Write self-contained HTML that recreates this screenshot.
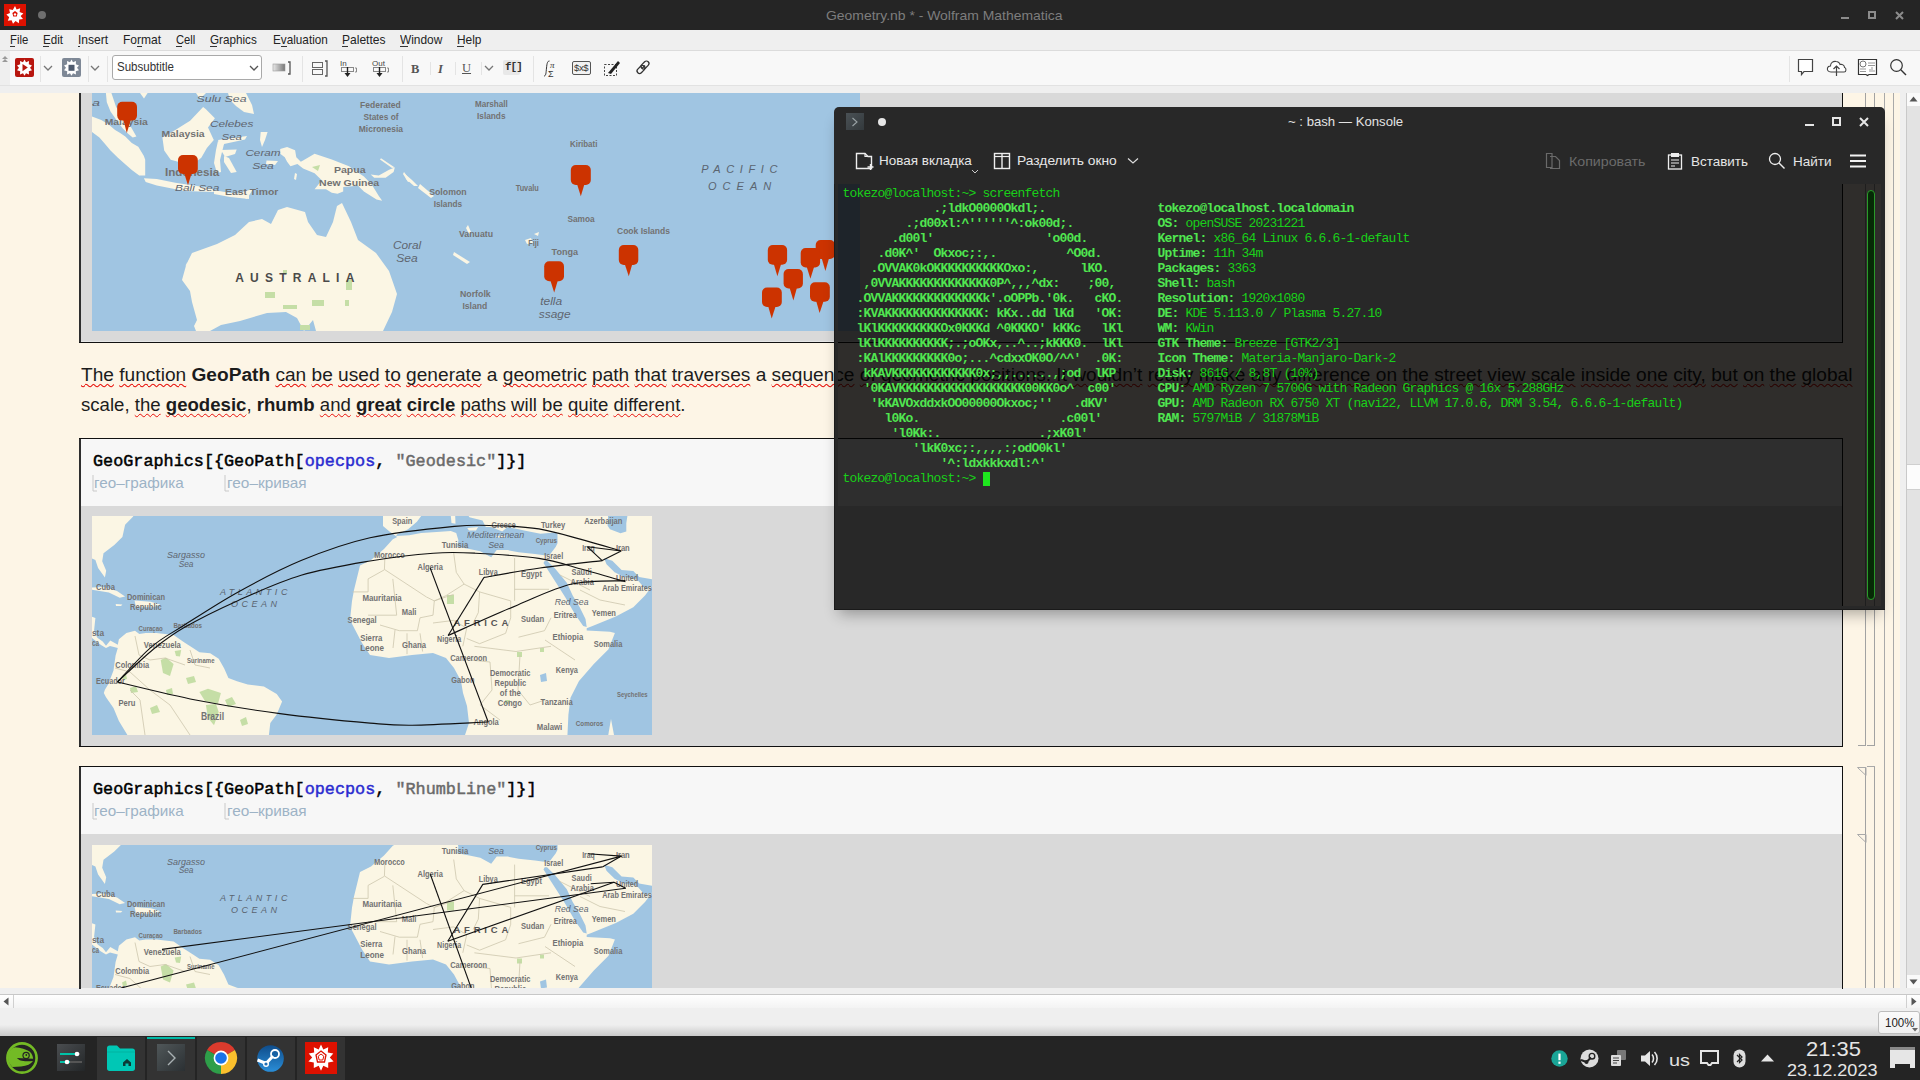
<!DOCTYPE html><html><head><meta charset="utf-8"><style>
*{margin:0;padding:0;box-sizing:border-box}
html,body{width:1920px;height:1080px;overflow:hidden;background:#fdf5e7;position:relative}
.a{position:absolute}
.nw{white-space:nowrap}
svg{position:absolute;overflow:visible}
</style></head><body><div class="a" style="left:0px;top:0px;width:1920px;height:30px;background:#252525;"></div><svg style="left:4px;top:4px" width="22" height="22" viewBox="0 0 22 22"><rect width="22" height="22" fill="#dd1100"/>
<polygon fill="#fff" points="11,2 12.6,5.6 16.2,4.2 15.6,8 19.4,9.4 16.6,12 19,15 15.2,15.4 14.8,19.2 11.6,17 9,19.8 7.6,16.2 3.8,16.8 5.2,13.2 2.4,10.6 6,9 5.2,5.2 8.8,6 "/>
<polygon fill="#dd1100" points="11,7 13.6,9 12.8,12.4 9.2,12.4 8.4,9"/><circle cx="11" cy="10.4" r="1.2" fill="#fff"/></svg><div class="a" style="left:38px;top:11px;width:8px;height:8px;border-radius:50%;background:#6e6e6e"></div><div id="t1" class="a nw" style="transform-origin:0 0;transform:scaleX(1.0408);left:825.5px;top:9.05px;font-family:'Liberation Sans',sans-serif;font-size:13.4px;line-height:13.4px;height:13.4px;color:#7d7d7d;font-weight:normal;">Geometry.nb * - Wolfram Mathematica</div><div class="a" style="left:1841px;top:17px;width:8px;height:2px;background:#8c8c8c;"></div><div class="a" style="left:1868px;top:11px;width:8px;height:8px;border:2px solid #8c8c8c"></div><svg style="left:1895px;top:11px" width="9" height="9"><path d="M1 1L8 8M8 1L1 8" stroke="#8c8c8c" stroke-width="2"/></svg><div class="a" style="left:0px;top:30px;width:1920px;height:20px;background:#efefef;"></div><div class="a" style="left:0px;top:50px;width:1920px;height:1px;background:#dcdcdc;"></div><div id="t2" class="a nw" style="transform-origin:0 0;transform:scaleX(0.8898);left:10.4px;top:34.05px;font-family:'Liberation Sans',sans-serif;font-size:12.7px;line-height:12.7px;height:12.7px;color:#232323;font-weight:normal;">File</div><div id="t3" class="a nw" style="transform-origin:0 0;transform:scaleX(0.9143);left:43.4px;top:34.05px;font-family:'Liberation Sans',sans-serif;font-size:12.7px;line-height:12.7px;height:12.7px;color:#232323;font-weight:normal;">Edit</div><div id="t4" class="a nw" style="transform-origin:0 0;transform:scaleX(0.9516);left:78.1px;top:34.05px;font-family:'Liberation Sans',sans-serif;font-size:12.7px;line-height:12.7px;height:12.7px;color:#232323;font-weight:normal;">Insert</div><div id="t5" class="a nw" style="transform-origin:0 0;transform:scaleX(0.9481);left:123.4px;top:34.05px;font-family:'Liberation Sans',sans-serif;font-size:12.7px;line-height:12.7px;height:12.7px;color:#232323;font-weight:normal;">Format</div><div id="t6" class="a nw" style="transform-origin:0 0;transform:scaleX(0.8829);left:176px;top:34.05px;font-family:'Liberation Sans',sans-serif;font-size:12.7px;line-height:12.7px;height:12.7px;color:#232323;font-weight:normal;">Cell</div><div id="t7" class="a nw" style="transform-origin:0 0;transform:scaleX(0.9216);left:210.3px;top:34.05px;font-family:'Liberation Sans',sans-serif;font-size:12.7px;line-height:12.7px;height:12.7px;color:#232323;font-weight:normal;">Graphics</div><div id="t8" class="a nw" style="transform-origin:0 0;transform:scaleX(0.9249);left:272.5px;top:34.05px;font-family:'Liberation Sans',sans-serif;font-size:12.7px;line-height:12.7px;height:12.7px;color:#232323;font-weight:normal;">Evaluation</div><div id="t9" class="a nw" style="transform-origin:0 0;transform:scaleX(0.9489);left:342px;top:34.05px;font-family:'Liberation Sans',sans-serif;font-size:12.7px;line-height:12.7px;height:12.7px;color:#232323;font-weight:normal;">Palettes</div><div id="t10" class="a nw" style="transform-origin:0 0;transform:scaleX(0.9374);left:400.2px;top:34.05px;font-family:'Liberation Sans',sans-serif;font-size:12.7px;line-height:12.7px;height:12.7px;color:#232323;font-weight:normal;">Window</div><div id="t11" class="a nw" style="transform-origin:0 0;transform:scaleX(0.9389);left:456.8px;top:34.05px;font-family:'Liberation Sans',sans-serif;font-size:12.7px;line-height:12.7px;height:12.7px;color:#232323;font-weight:normal;">Help</div><div class="a" style="left:10.4px;top:46px;width:5px;height:1px;background:#333;"></div><div class="a" style="left:43.4px;top:46px;width:6px;height:1px;background:#333;"></div><div class="a" style="left:78.1px;top:46px;width:2px;height:1px;background:#333;"></div><div class="a" style="left:137px;top:46px;width:5px;height:1px;background:#333;"></div><div class="a" style="left:176px;top:46px;width:6px;height:1px;background:#333;"></div><div class="a" style="left:210.3px;top:46px;width:7px;height:1px;background:#333;"></div><div class="a" style="left:281px;top:46px;width:6px;height:1px;background:#333;"></div><div class="a" style="left:342px;top:46px;width:6px;height:1px;background:#333;"></div><div class="a" style="left:400.2px;top:46px;width:8px;height:1px;background:#333;"></div><div class="a" style="left:456.8px;top:46px;width:7px;height:1px;background:#333;"></div><div class="a" style="left:0px;top:51px;width:1920px;height:35px;background:#f8f8f8;"></div><div class="a" style="left:0px;top:51px;width:10px;height:35px;background:#efefef;"></div><div class="a" style="left:0px;top:85px;width:1920px;height:1px;background:#e2e2e2;"></div><div class="a" style="left:0px;top:86px;width:1920px;height:7px;background:#efefef;"></div><svg style="left:1px;top:55px" width="8" height="8"><path d="M1 4L4 1L7 4M1 7L4 4L7 7" fill="#999"/></svg><div class="a" style="left:40px;top:56px;width:1px;height:26px;background:#e4e4e4;"></div><div class="a" style="left:88px;top:56px;width:1px;height:26px;background:#e4e4e4;"></div><div class="a" style="left:107px;top:56px;width:1px;height:26px;background:#e4e4e4;"></div><div class="a" style="left:302px;top:56px;width:1px;height:26px;background:#e4e4e4;"></div><div class="a" style="left:402px;top:56px;width:1px;height:26px;background:#e4e4e4;"></div><div class="a" style="left:533px;top:56px;width:1px;height:26px;background:#e4e4e4;"></div><div class="a" style="left:1789px;top:56px;width:1px;height:26px;background:#e4e4e4;"></div><div class="a" style="left:430px;top:62px;width:1px;height:13px;background:#e4e4e4;"></div><div class="a" style="left:455px;top:62px;width:1px;height:13px;background:#e4e4e4;"></div><div class="a" style="left:481px;top:62px;width:1px;height:13px;background:#e4e4e4;"></div><svg style="left:15px;top:58px" width="19" height="19" viewBox="0 0 19 19"><rect width="19" height="19" rx="2" fill="#b8160f"/>
<polygon fill="#fff" points="9.5,1.5 11,4.2 14,3 13.8,6.2 17,7.4 15,9.8 17,12.2 13.8,13.2 14,16.4 11,15.2 9.5,17.8 8,15.2 5,16.4 5.2,13.2 2,12.2 4,9.8 2,7.4 5.2,6.2 5,3 8,4.2"/>
<polygon fill="#b8160f" points="7.5,6 12.8,9.6 7.5,13.2"/></svg><svg style="left:43px;top:65px" width="10" height="6"><path d="M1 1L5 5L9 1" stroke="#777" stroke-width="1.3" fill="none"/></svg><svg style="left:62px;top:58px" width="19" height="19" viewBox="0 0 19 19"><rect width="19" height="19" rx="2" fill="#7e8896"/>
<polygon fill="#fff" points="9.5,1.5 11,4.2 14,3 13.8,6.2 17,7.4 15,9.8 17,12.2 13.8,13.2 14,16.4 11,15.2 9.5,17.8 8,15.2 5,16.4 5.2,13.2 2,12.2 4,9.8 2,7.4 5.2,6.2 5,3 8,4.2"/>
<rect x="6.5" y="6.8" width="6" height="6" fill="#4f5b6e"/></svg><svg style="left:90px;top:65px" width="10" height="6"><path d="M1 1L5 5L9 1" stroke="#777" stroke-width="1.3" fill="none"/></svg><div class="a" style="left:112px;top:55px;width:150px;height:25px;border:1px solid #a9a9a9;border-radius:3px;background:#fff"></div><div id="t12" class="a nw" style="transform-origin:0 0;transform:scaleX(0.8861);left:117px;top:60.49px;font-family:'Liberation Sans',sans-serif;font-size:13px;line-height:13px;height:13px;color:#333;font-weight:normal;">Subsubtitle</div><svg style="left:249px;top:65px" width="10" height="6"><path d="M1 1L5 5L9 1" stroke="#555" stroke-width="1.3" fill="none"/></svg><svg style="left:272px;top:60px" width="20" height="16"><defs><linearGradient id="gg" x1="0" x2="1"><stop offset="0" stop-color="#e8e8e8"/><stop offset="1" stop-color="#777"/></linearGradient></defs><rect x="1" y="4" width="12" height="7" fill="url(#gg)" stroke="#999" stroke-width="0.6"/><path d="M16 2H18V14H16" stroke="#555" stroke-width="1.3" fill="none"/></svg><svg style="left:311px;top:59px" width="18" height="18"><rect x="1.5" y="3.5" width="10" height="5" fill="none" stroke="#666"/><rect x="1.5" y="10.5" width="10" height="5" fill="none" stroke="#666"/><path d="M14 2H16V17H14" stroke="#555" stroke-width="1.3" fill="none"/></svg><svg style="left:340px;top:58px" width="20" height="20"><text x="0" y="8" font-family="Liberation Sans" font-size="8" fill="#444">In</text><rect x="1.5" y="9.5" width="12" height="4" fill="none" stroke="#888"/><path d="M7.5 9V17" stroke="#222" stroke-width="1.4"/><path d="M4.5 15L7.5 19L10.5 15Z" fill="#222"/><path d="M15 10H16.5V14H15" stroke="#888" fill="none"/></svg><svg style="left:372px;top:58px" width="20" height="20"><text x="0" y="8" font-family="Liberation Sans" font-size="8" fill="#444">Out</text><rect x="1.5" y="9.5" width="12" height="4" fill="none" stroke="#888"/><path d="M7.5 9V17" stroke="#222" stroke-width="1.4"/><path d="M4.5 15L7.5 19L10.5 15Z" fill="#222"/><path d="M15 10H16.5V14H15" stroke="#888" fill="none"/></svg><div class="a" style="left:411px;top:61px;font-family:'Liberation Serif',serif;font-weight:bold;font-size:12.5px;color:#555;line-height:16px">B</div><div class="a" style="left:438px;top:61px;font-family:'Liberation Serif',serif;font-style:italic;font-weight:bold;font-size:12.5px;color:#555;line-height:16px">I</div><div class="a" style="left:462px;top:60px;font-family:'Liberation Serif',serif;font-size:12.5px;color:#555;line-height:16px;text-decoration:underline">U</div><svg style="left:484px;top:65px" width="10" height="6"><path d="M1 1L5 5L9 1" stroke="#777" stroke-width="1.3" fill="none"/></svg><div class="a" style="left:503px;top:60px;width:17px;height:15px;background:#e8e8e8;border-radius:2px"></div><div class="a nw" style="left:505px;top:61px;font-family:'Liberation Mono',monospace;font-weight:bold;font-size:11px;color:#333;line-height:13px;letter-spacing:-1px">f[]</div><svg style="left:541px;top:59px" width="18" height="19"><path d="M3 17C5 17 5 14 5.5 9C6 4 6.5 2 8.5 2" stroke="#333" fill="none" stroke-width="1"/><text x="9" y="9" font-family="Liberation Serif" font-style="italic" font-size="9" fill="#333">π</text><text x="7" y="18" font-family="Liberation Sans" font-size="9" fill="#333">Σ</text></svg><div class="a" style="left:572px;top:61px;width:19px;height:14px;border:1.3px solid #555;border-radius:2px;background:#f2f2f2"></div><div class="a nw" style="left:574px;top:63px;font-family:'Liberation Sans',sans-serif;font-size:9.5px;color:#333;line-height:10px;letter-spacing:-0.4px">$x$</div><svg style="left:603px;top:59px" width="19" height="18"><rect x="1.5" y="5.5" width="12" height="11" fill="none" stroke="#444" stroke-dasharray="2,1.5"/><path d="M5 14L15 2L17 4L8 15Z" fill="#222"/></svg><svg style="left:635px;top:59px" width="17" height="17"><path d="M7 9.5L10 6.5" stroke="#333" stroke-width="1.3"/><rect x="7.5" y="1.5" width="5" height="9" rx="2.5" transform="rotate(45 10 6)" fill="none" stroke="#333" stroke-width="1.3"/><rect x="3.5" y="6" width="5" height="9" rx="2.5" transform="rotate(45 6 10.5)" fill="none" stroke="#333" stroke-width="1.3"/></svg><svg style="left:1797px;top:58px" width="18" height="18"><path d="M1.5 1.5H15.5V13.5H7L4.5 16.5V13.5H1.5Z" fill="#fff" stroke="#444" stroke-width="1.2"/></svg><svg style="left:1826px;top:58px" width="22" height="19"><path d="M5 14C2 14 1 12 1.5 10C2 8 4 8 4.5 8C4.5 5 7 3 10 3.5C12 3.5 14 5 14 6.5C16 6 18.5 7 18.5 9.5C20.5 10 20.5 14 18 14Z" fill="#fff" stroke="#444" stroke-width="1.1"/><path d="M10.5 18V8M7.5 11L10.5 8L13.5 11" stroke="#444" stroke-width="1.2" fill="none"/></svg><svg style="left:1857px;top:58px" width="21" height="19"><path d="M1.5 1.5H19.5V16.5H12L10.5 17.5L9 16.5H1.5Z" fill="#fff" stroke="#333" stroke-width="1.2"/><circle cx="6" cy="6" r="3" fill="none" stroke="#777"/><path d="M11 5H18M11 7.5H18M3 11H9M3 13.5H9M13 14V11M15 14V9M17 14V12" stroke="#999"/></svg><svg style="left:1889px;top:58px" width="19" height="19"><circle cx="7.5" cy="7.5" r="5.8" fill="none" stroke="#333" stroke-width="1.2"/><path d="M11.8 11.8L17 17" stroke="#333" stroke-width="1.4"/></svg><div class="a" style="left:0px;top:93px;width:1900px;height:895px;background:#fdf5e6;"></div><div class="a" style="left:1900px;top:93px;width:7px;height:895px;background:#efefef;"></div><div class="a" style="left:1906px;top:93px;width:1px;height:895px;background:#c9c9c9;"></div><div class="a" style="left:1907px;top:93px;width:13px;height:895px;background:#e3e3e3;"></div><div class="a" style="left:1907px;top:93px;width:13px;height:13px;background:#fafafa;"></div><svg style="left:1909px;top:96px" width="9" height="6"><path d="M0.5 5.5L4.5 0.5L8.5 5.5Z" fill="#555"/></svg><div class="a" style="left:1907px;top:975px;width:13px;height:13px;background:#fafafa;"></div><svg style="left:1909px;top:979px" width="9" height="6"><path d="M0.5 0.5L4.5 5.5L8.5 0.5Z" fill="#555"/></svg><div class="a" style="left:1907px;top:464px;width:13px;height:26px;background:#fcfcfc;border-top:1px solid #cfcfcf;border-bottom:1px solid #cfcfcf"></div><div class="a" style="left:0px;top:988px;width:1920px;height:6px;background:#efefef;"></div><div class="a" style="left:0px;top:994px;width:1920px;height:1px;background:#c8c8c8;"></div><div class="a" style="left:0px;top:995px;width:1920px;height:13px;background:#f9f9f9;background:linear-gradient(#ffffff,#f3f3f3)"></div><svg style="left:3px;top:997px" width="6" height="9"><path d="M5.5 0.5L0.5 4.5L5.5 8.5Z" fill="#555"/></svg><div class="a" style="left:13px;top:995px;width:1px;height:13px;background:#d0d0d0;"></div><div class="a" style="left:1906px;top:995px;width:1px;height:13px;background:#d0d0d0;"></div><svg style="left:1911px;top:997px" width="6" height="9"><path d="M0.5 0.5L5.5 4.5L0.5 8.5Z" fill="#555"/></svg><div class="a" style="left:0px;top:1008px;width:1920px;height:28px;background:#efefef;background:linear-gradient(#efefef 0,#efefef 60%,#c9c9c9 100%)"></div><div class="a" style="left:1878px;top:1011px;width:42px;height:23px;border:1px solid #bdbdbd;border-radius:3px;background:linear-gradient(#fbfbfb,#f0f0f0)"></div><div id="t13" class="a nw" style="transform-origin:0 0;transform:scaleX(0.9464);left:1884.5px;top:1017.17px;font-family:'Liberation Sans',sans-serif;font-size:12.2px;line-height:12.2px;height:12.2px;color:#222;font-weight:normal;">100%</div><svg style="left:1912px;top:1028px" width="6" height="4"><path d="M0 0H6L3 3.5Z" fill="#666"/></svg><div class="a" style="left:81px;top:93px;width:1761px;height:249px;background:#d9d9d9;"></div><div class="a" style="left:79px;top:93px;width:2px;height:250px;background:#2e2e2e;"></div><div class="a" style="left:1842px;top:93px;width:1px;height:250px;background:#111;"></div><div class="a" style="left:79px;top:342px;width:1764px;height:1px;background:#111;"></div><div class="a" style="left:81px;top:341px;width:1761px;height:1px;background:#e6e6e6;"></div><div class="a" style="left:81px;top:439px;width:1761px;height:67px;background:#f7f7f7;"></div><div class="a" style="left:81px;top:506px;width:1761px;height:240px;background:#d9d9d9;"></div><div class="a" style="left:79px;top:438px;width:2px;height:309px;background:#2e2e2e;"></div><div class="a" style="left:1842px;top:438px;width:1px;height:309px;background:#111;"></div><div class="a" style="left:79px;top:438px;width:1764px;height:1px;background:#111;"></div><div class="a" style="left:79px;top:746px;width:1764px;height:1px;background:#111;"></div><div class="a" style="left:81px;top:767px;width:1761px;height:67px;background:#f7f7f7;"></div><div class="a" style="left:81px;top:834px;width:1761px;height:154px;background:#d9d9d9;"></div><div class="a" style="left:79px;top:766px;width:2px;height:223px;background:#2e2e2e;"></div><div class="a" style="left:1842px;top:766px;width:1px;height:223px;background:#111;"></div><div class="a" style="left:79px;top:766px;width:1764px;height:1px;background:#111;"></div><div class="a" style="left:1884px;top:93px;width:1px;height:895px;background:#a9a9a9;"></div><div class="a" style="left:1893px;top:93px;width:1px;height:895px;background:#a9a9a9;"></div><div class="a" style="left:1874px;top:93px;width:1px;height:653px;background:#a2a2a2;"></div><div class="a" style="left:1867px;top:745px;width:8px;height:1px;background:#a2a2a2;"></div><div class="a" style="left:1865px;top:93px;width:1px;height:653px;background:#a2a2a2;"></div><div class="a" style="left:1858px;top:745px;width:8px;height:1px;background:#a2a2a2;"></div><div class="a" style="left:1874px;top:766px;width:1px;height:222px;background:#a2a2a2;"></div><div class="a" style="left:1867px;top:766px;width:8px;height:1px;background:#a9a9a9;"></div><div class="a" style="left:1865px;top:767px;width:1px;height:67px;background:#a2a2a2;"></div><svg style="left:1857px;top:767px" width="10" height="9"><path d="M0.5 0.5H9V8.5Z" fill="none" stroke="#a9a9a9"/></svg><div class="a" style="left:1865px;top:834px;width:1px;height:154px;background:#a2a2a2;"></div><svg style="left:1857px;top:834px" width="10" height="9"><path d="M0.5 0.5H9V8.5Z" fill="none" stroke="#a9a9a9"/></svg><div class="a" style="left:1865px;top:442px;width:1px;height:0px;background:#a2a2a2;"></div><div id="t14" class="a nw" style="transform-origin:0 0;transform:scaleX(1.0116);left:80.5px;top:366.30px;font-family:'Liberation Sans',sans-serif;font-size:18.9px;line-height:18.9px;height:18.9px;color:#1c1c1c;font-weight:normal;"><span style="text-decoration:underline wavy #e8100a;text-decoration-thickness:1px;text-underline-offset:2px;text-decoration-skip-ink:none">The</span> <span style="text-decoration:underline wavy #e8100a;text-decoration-thickness:1px;text-underline-offset:2px;text-decoration-skip-ink:none">function</span> <span style="font-weight:bold;">GeoPath</span> <span style="text-decoration:underline wavy #e8100a;text-decoration-thickness:1px;text-underline-offset:2px;text-decoration-skip-ink:none">can</span> <span style="text-decoration:underline wavy #e8100a;text-decoration-thickness:1px;text-underline-offset:2px;text-decoration-skip-ink:none">be</span> <span style="text-decoration:underline wavy #e8100a;text-decoration-thickness:1px;text-underline-offset:2px;text-decoration-skip-ink:none">used</span> <span style="text-decoration:underline wavy #e8100a;text-decoration-thickness:1px;text-underline-offset:2px;text-decoration-skip-ink:none">to</span> <span style="text-decoration:underline wavy #e8100a;text-decoration-thickness:1px;text-underline-offset:2px;text-decoration-skip-ink:none">generate</span> a <span style="text-decoration:underline wavy #e8100a;text-decoration-thickness:1px;text-underline-offset:2px;text-decoration-skip-ink:none">geometric</span> <span style="text-decoration:underline wavy #e8100a;text-decoration-thickness:1px;text-underline-offset:2px;text-decoration-skip-ink:none">path</span> <span style="text-decoration:underline wavy #e8100a;text-decoration-thickness:1px;text-underline-offset:2px;text-decoration-skip-ink:none">that</span> <span style="text-decoration:underline wavy #e8100a;text-decoration-thickness:1px;text-underline-offset:2px;text-decoration-skip-ink:none">traverses</span> a <span style="text-decoration:underline wavy #e8100a;text-decoration-thickness:1px;text-underline-offset:2px;text-decoration-skip-ink:none">sequence</span> <span style="text-decoration:underline wavy #e8100a;text-decoration-thickness:1px;text-underline-offset:2px;text-decoration-skip-ink:none">of</span> <span style="text-decoration:underline wavy #e8100a;text-decoration-thickness:1px;text-underline-offset:2px;text-decoration-skip-ink:none">geometric</span> <span style="text-decoration:underline wavy #e8100a;text-decoration-thickness:1px;text-underline-offset:2px;text-decoration-skip-ink:none">positions.</span> <span style="text-decoration:underline wavy #e8100a;text-decoration-thickness:1px;text-underline-offset:2px;text-decoration-skip-ink:none">It</span> <span style="text-decoration:underline wavy #e8100a;text-decoration-thickness:1px;text-underline-offset:2px;text-decoration-skip-ink:none">wouldn&#8217;t</span> <span style="text-decoration:underline wavy #e8100a;text-decoration-thickness:1px;text-underline-offset:2px;text-decoration-skip-ink:none">really</span> <span style="text-decoration:underline wavy #e8100a;text-decoration-thickness:1px;text-underline-offset:2px;text-decoration-skip-ink:none">make</span> <span style="text-decoration:underline wavy #e8100a;text-decoration-thickness:1px;text-underline-offset:2px;text-decoration-skip-ink:none">any</span> <span style="text-decoration:underline wavy #e8100a;text-decoration-thickness:1px;text-underline-offset:2px;text-decoration-skip-ink:none">difference</span> <span style="text-decoration:underline wavy #e8100a;text-decoration-thickness:1px;text-underline-offset:2px;text-decoration-skip-ink:none">on</span> <span style="text-decoration:underline wavy #e8100a;text-decoration-thickness:1px;text-underline-offset:2px;text-decoration-skip-ink:none">the</span> <span style="text-decoration:underline wavy #e8100a;text-decoration-thickness:1px;text-underline-offset:2px;text-decoration-skip-ink:none">street</span> <span style="text-decoration:underline wavy #e8100a;text-decoration-thickness:1px;text-underline-offset:2px;text-decoration-skip-ink:none">view</span> <span style="text-decoration:underline wavy #e8100a;text-decoration-thickness:1px;text-underline-offset:2px;text-decoration-skip-ink:none">scale</span> <span style="text-decoration:underline wavy #e8100a;text-decoration-thickness:1px;text-underline-offset:2px;text-decoration-skip-ink:none">inside</span> <span style="text-decoration:underline wavy #e8100a;text-decoration-thickness:1px;text-underline-offset:2px;text-decoration-skip-ink:none">one</span> <span style="text-decoration:underline wavy #e8100a;text-decoration-thickness:1px;text-underline-offset:2px;text-decoration-skip-ink:none">city,</span> <span style="text-decoration:underline wavy #e8100a;text-decoration-thickness:1px;text-underline-offset:2px;text-decoration-skip-ink:none">but</span> <span style="text-decoration:underline wavy #e8100a;text-decoration-thickness:1px;text-underline-offset:2px;text-decoration-skip-ink:none">on</span> <span style="text-decoration:underline wavy #e8100a;text-decoration-thickness:1px;text-underline-offset:2px;text-decoration-skip-ink:none">the</span> <span style="text-decoration:underline wavy #e8100a;text-decoration-thickness:1px;text-underline-offset:2px;text-decoration-skip-ink:none">global</span></div><div id="t15" class="a nw" style="transform-origin:0 0;transform:scaleX(0.9845);left:80.5px;top:395.80px;font-family:'Liberation Sans',sans-serif;font-size:18.9px;line-height:18.9px;height:18.9px;color:#1c1c1c;font-weight:normal;"><span style="">scale,</span> <span style="text-decoration:underline wavy #e8100a;text-decoration-thickness:1px;text-underline-offset:2px;text-decoration-skip-ink:none">the</span> <span style="font-weight:bold;text-decoration:underline wavy #e8100a;text-decoration-thickness:1px;text-underline-offset:2px;text-decoration-skip-ink:none">geodesic</span>, <span style="font-weight:bold;">rhumb</span> <span style="text-decoration:underline wavy #e8100a;text-decoration-thickness:1px;text-underline-offset:2px;text-decoration-skip-ink:none">and</span> <span style="font-weight:bold;text-decoration:underline wavy #e8100a;text-decoration-thickness:1px;text-underline-offset:2px;text-decoration-skip-ink:none">great</span> <span style="font-weight:bold;text-decoration:underline wavy #e8100a;text-decoration-thickness:1px;text-underline-offset:2px;text-decoration-skip-ink:none">circle</span> <span style="text-decoration:underline wavy #e8100a;text-decoration-thickness:1px;text-underline-offset:2px;text-decoration-skip-ink:none">paths</span> <span style="text-decoration:underline wavy #e8100a;text-decoration-thickness:1px;text-underline-offset:2px;text-decoration-skip-ink:none">will</span> <span style="text-decoration:underline wavy #e8100a;text-decoration-thickness:1px;text-underline-offset:2px;text-decoration-skip-ink:none">be</span> <span style="text-decoration:underline wavy #e8100a;text-decoration-thickness:1px;text-underline-offset:2px;text-decoration-skip-ink:none">quite</span> <span style="text-decoration:underline wavy #e8100a;text-decoration-thickness:1px;text-underline-offset:2px;text-decoration-skip-ink:none">different</span>.</div><div id="t16" class="a nw" style="transform-origin:0 0;transform:scaleX(1.0498);left:92.6px;top:453.84px;font-family:'Liberation Mono',monospace;font-size:16px;line-height:16px;height:16px;color:#000;font-weight:normal;-webkit-text-stroke:0.45px currentColor;"><span style="color:#000">GeoGraphics[{GeoPath[</span><span style="color:#2b2bd0">opecpos</span><span style="color:#000">, </span><span style="color:#6a6a6a">"Geodesic"</span><span style="color:#000">]}]</span></div><div id="t17" class="a nw" style="transform-origin:0 0;transform:scaleX(1.0522);left:94.4px;top:475.92px;font-family:'Liberation Sans',sans-serif;font-size:14.5px;line-height:14.5px;height:14.5px;color:#9db3c6;font-weight:normal;">гео–графика</div><div id="t18" class="a nw" style="transform-origin:0 0;transform:scaleX(1.0607);left:227.3px;top:475.92px;font-family:'Liberation Sans',sans-serif;font-size:14.5px;line-height:14.5px;height:14.5px;color:#9db3c6;font-weight:normal;">гео–кривая</div><svg style="left:92px;top:475.2px" width="6" height="17"><path d="M1 0V16H5" stroke="#c9c9c9" fill="none"/></svg><svg style="left:224px;top:475.2px" width="6" height="17"><path d="M1 0V16H5" stroke="#c9c9c9" fill="none"/></svg><div id="t19" class="a nw" style="transform-origin:0 0;transform:scaleX(1.0498);left:92.6px;top:781.84px;font-family:'Liberation Mono',monospace;font-size:16px;line-height:16px;height:16px;color:#000;font-weight:normal;-webkit-text-stroke:0.45px currentColor;"><span style="color:#000">GeoGraphics[{GeoPath[</span><span style="color:#2b2bd0">opecpos</span><span style="color:#000">, </span><span style="color:#6a6a6a">"RhumbLine"</span><span style="color:#000">]}]</span></div><div id="t20" class="a nw" style="transform-origin:0 0;transform:scaleX(1.0522);left:94.4px;top:803.92px;font-family:'Liberation Sans',sans-serif;font-size:14.5px;line-height:14.5px;height:14.5px;color:#9db3c6;font-weight:normal;">гео–графика</div><div id="t21" class="a nw" style="transform-origin:0 0;transform:scaleX(1.0607);left:227.3px;top:803.92px;font-family:'Liberation Sans',sans-serif;font-size:14.5px;line-height:14.5px;height:14.5px;color:#9db3c6;font-weight:normal;">гео–кривая</div><svg style="left:92px;top:803.2px" width="6" height="17"><path d="M1 0V16H5" stroke="#c9c9c9" fill="none"/></svg><svg style="left:224px;top:803.2px" width="6" height="17"><path d="M1 0V16H5" stroke="#c9c9c9" fill="none"/></svg><svg style="left:0;top:0" width="1920" height="1080" viewBox="0 0 1920 1080"><defs><clipPath id="m1"><rect x="92" y="93" width="768" height="238"/></clipPath><clipPath id="m2"><rect x="92" y="516" width="560" height="219"/></clipPath><clipPath id="m3"><rect x="92" y="845" width="560" height="143"/></clipPath></defs><g clip-path="url(#m1)"><rect x="92" y="93" width="768" height="238" fill="#a0c5e2"/><path d="M105.9 93.0 L106.8 102.3 L110.5 111.5 L117.0 120.8 L122.6 128.2 L128.1 133.7 L132.7 137.4 L136.4 136.5 L132.7 130.0 L129.0 123.6 L122.6 116.1 L116.1 106.9 L111.4 93.0Z" fill="#fbf6e4" /><path d="M92.0 116.6 L101.3 119.9 L108.7 124.5 L115.1 130.0 L119.8 132.8 L125.3 136.5 L131.8 143.0 L138.3 146.7 L143.9 156.0 L145.2 159.7 L145.2 175.4 L139.2 175.4 L131.8 169.9 L124.4 163.4 L117.9 157.8 L110.5 150.4 L105.9 144.9 L99.4 137.4 L92.0 131.9Z" fill="#fbf6e4" /><path d="M140.0 93.0 L147.6 93.0 L144.0 98.6Z" fill="#fbf6e4" /><path d="M162.4 137.4 L175.3 130.0 L190.1 120.8 L203.1 106.9 L205.7 109.0 L214.9 118.2 L208.0 127.4 L213.8 140.0 L206.9 148.0 L201.3 157.8 L193.9 163.4 L184.6 163.4 L170.7 159.7 L164.2 150.4Z" fill="#fbf6e4" /><path d="M228.0 93.0 L246.0 93.0 L252.0 105.0 L254.0 114.0 L244.0 112.0 L236.0 106.0 L230.0 100.0Z" fill="#fbf6e4" /><path d="M196.0 93.0 L206.0 93.0 L200.0 99.0Z" fill="#fbf6e4" /><path d="M218.0 140.0 L247.0 136.0 L245.0 139.5 L224.0 144.0 L221.0 147.0Z" fill="#fbf6e4" /><path d="M218.0 141.0 L224.0 144.0 L222.0 152.0 L220.0 160.0 L221.0 172.0 L217.0 173.0 L214.0 163.0 L216.0 150.0Z" fill="#fbf6e4" /><path d="M221.0 150.0 L236.7 149.5 L235.0 154.0 L225.0 157.0Z" fill="#fbf6e4" /><path d="M224.0 156.0 L229.0 158.0 L236.7 172.0 L231.0 173.0 L224.0 162.0Z" fill="#fbf6e4" /><path d="M143.9 178.2 L156.8 179.1 L175.3 182.8 L193.9 185.6 L212.0 188.4 L214.0 192.0 L184.6 191.1 L156.8 185.6 L145.7 181.9Z" fill="#fbf6e4" /><path d="M214.0 190.0 L230.0 193.0 L249.0 195.0 L249.0 199.0 L230.0 197.0 L214.0 194.0Z" fill="#fbf6e4" /><path d="M235.0 194.0 L253.0 189.0 L247.0 199.0Z" fill="#fbf6e4" /><path d="M260.7 132.0 L267.6 131.9 L265.0 140.0 L262.0 147.0 L260.0 140.0Z" fill="#fbf6e4" /><path d="M266.5 160.6 L278.0 161.0 L275.0 165.0 L266.0 164.0Z" fill="#fbf6e4" /><path d="M295.0 173.0 L297.0 174.0 L296.0 180.0 L294.0 179.0Z" fill="#fbf6e4" /><path d="M280.2 149.1 L287.1 146.9 L295.1 150.3 L296.3 157.2 L300.8 161.8 L303.1 160.6 L314.6 153.7 L331.8 159.5 L349.0 166.3 L363.9 176.6 L371.9 184.7 L378.8 196.1 L382.2 200.7 L376.5 199.6 L363.9 191.5 L358.1 185.8 L343.2 187.0 L343.2 191.5 L337.5 193.8 L331.8 192.7 L326.0 189.3 L314.6 189.3 L319.2 183.5 L321.5 180.1 L314.6 173.2 L303.1 168.6 L297.4 164.0 L290.5 166.3 L287.1 161.8 L284.8 157.2 L280.2 153.7Z" fill="#fbf6e4" /><path d="M370.7 174.4 L378.8 175.5 L389.1 169.8 L394.8 167.5 L393.6 172.1 L385.6 177.8 L374.2 177.8Z" fill="#fbf6e4" /><path d="M381.0 158.3 L394.8 167.5 L392.0 168.0 L380.0 159.5Z" fill="#fbf6e4" /><path d="M404.0 172.0 L410.8 181.2 L408.0 182.0 L403.0 174.0Z" fill="#fbf6e4" /><path d="M312.0 167.0 L320.0 165.0 L318.0 171.0Z" fill="#c5dea6" /><path d="M405.0 174.0 L412.0 180.0 L418.0 186.0 L414.0 186.0 L406.0 179.0Z" fill="#fbf6e4" /><path d="M420.0 184.0 L434.0 196.0 L431.0 198.0 L418.0 188.0Z" fill="#fbf6e4" /><path d="M468.0 225.0 L471.0 232.0 L469.0 234.0 L466.0 228.0Z" fill="#fbf6e4" /><path d="M454.0 252.0 L470.0 262.0 L467.0 264.0 L453.0 255.0Z" fill="#fbf6e4" /><path d="M525.0 240.0 L531.0 238.0 L533.0 243.0 L527.0 244.0Z" fill="#fbf6e4" /><path d="M534.0 234.0 L539.0 232.0 L538.0 236.0Z" fill="#fbf6e4" /><path d="M185.0 267.0 L192.0 253.0 L217.0 244.0 L235.0 235.0 L249.0 222.0 L262.0 219.0 L271.0 224.0 L278.0 210.0 L287.0 207.0 L305.0 212.0 L308.0 222.0 L317.0 235.0 L326.0 237.0 L333.0 222.0 L337.0 206.0 L342.0 203.0 L351.0 222.0 L358.0 240.0 L376.0 253.0 L389.0 271.0 L397.0 294.0 L392.0 312.0 L383.0 331.0 L316.0 331.0 L313.0 320.0 L304.0 331.0 L297.0 318.0 L286.0 312.0 L267.0 313.0 L240.0 321.0 L221.0 325.0 L210.0 331.0 L196.0 331.0 L194.0 326.0 L197.0 320.0 L192.0 302.0 L190.0 291.0 L182.0 280.0 L187.0 262.0Z" fill="#fbf6e4" /><rect x="265" y="292" width="10" height="6" fill="#c5dea6"/><rect x="283" y="305" width="14" height="4" fill="#c5dea6"/><rect x="312" y="300" width="12" height="6" fill="#c5dea6"/><rect x="283" y="270" width="4" height="4" fill="#c5dea6"/><rect x="346" y="280" width="6" height="10" fill="#c5dea6"/><rect x="345" y="300" width="4" height="6" fill="#c5dea6"/><rect x="300" y="325" width="10" height="5" fill="#c5dea6"/><text x="196.6" y="101.9" textLength="49.9" lengthAdjust="spacingAndGlyphs" font-family="Liberation Sans" font-size="9.5" font-weight="normal" fill="#5f6670" style="font-style:italic;">Sulu Sea</text><text x="104.7" y="125.2" textLength="43.1" lengthAdjust="spacingAndGlyphs" font-family="Liberation Sans" font-size="9.5" font-weight="bold" fill="#727272" style="">Malaysia</text><text x="161.5" y="136.5" textLength="43.1" lengthAdjust="spacingAndGlyphs" font-family="Liberation Sans" font-size="9.5" font-weight="bold" fill="#727272" style="">Malaysia</text><text x="210.0" y="127.0" textLength="43.3" lengthAdjust="spacingAndGlyphs" font-family="Liberation Sans" font-size="9.5" font-weight="normal" fill="#5f6670" style="font-style:italic;">Celebes</text><text x="221.6" y="139.9" textLength="20.4" lengthAdjust="spacingAndGlyphs" font-family="Liberation Sans" font-size="9.5" font-weight="normal" fill="#5f6670" style="font-style:italic;">Sea</text><text x="360.0" y="107.8" textLength="40.8" lengthAdjust="spacingAndGlyphs" font-family="Liberation Sans" font-size="8.5" font-weight="bold" fill="#727272" style="">Federated</text><text x="363.4" y="119.9" textLength="35.1" lengthAdjust="spacingAndGlyphs" font-family="Liberation Sans" font-size="8.5" font-weight="bold" fill="#727272" style="">States of</text><text x="358.8" y="132.1" textLength="44.2" lengthAdjust="spacingAndGlyphs" font-family="Liberation Sans" font-size="8.5" font-weight="bold" fill="#727272" style="">Micronesia</text><text x="245.4" y="155.8" textLength="35.2" lengthAdjust="spacingAndGlyphs" font-family="Liberation Sans" font-size="9.5" font-weight="normal" fill="#5f6670" style="font-style:italic;">Ceram</text><text x="252.2" y="168.9" textLength="21.6" lengthAdjust="spacingAndGlyphs" font-family="Liberation Sans" font-size="9.5" font-weight="normal" fill="#5f6670" style="font-style:italic;">Sea</text><text x="333.9" y="172.8" textLength="31.7" lengthAdjust="spacingAndGlyphs" font-family="Liberation Sans" font-size="9.5" font-weight="bold" fill="#727272" style="">Papua</text><text x="319.1" y="186.4" textLength="60.1" lengthAdjust="spacingAndGlyphs" font-family="Liberation Sans" font-size="9.5" font-weight="bold" fill="#727272" style="">New Guinea</text><text x="164.9" y="175.7" textLength="54.4" lengthAdjust="spacingAndGlyphs" font-family="Liberation Sans" font-size="10" font-weight="bold" fill="#727272" style="">Indonesia</text><text x="175.0" y="190.5" textLength="44.3" lengthAdjust="spacingAndGlyphs" font-family="Liberation Sans" font-size="9.5" font-weight="normal" fill="#5f6670" style="font-style:italic;">Bali Sea</text><text x="225.0" y="194.8" textLength="53.3" lengthAdjust="spacingAndGlyphs" font-family="Liberation Sans" font-size="9.5" font-weight="bold" fill="#727272" style="">East Timor</text><text x="429.2" y="195.2" textLength="37.4" lengthAdjust="spacingAndGlyphs" font-family="Liberation Sans" font-size="8.5" font-weight="bold" fill="#727272" style="">Solomon</text><text x="433.7" y="206.5" textLength="28.3" lengthAdjust="spacingAndGlyphs" font-family="Liberation Sans" font-size="8.5" font-weight="bold" fill="#727272" style="">Islands</text><text x="392.9" y="249.0" textLength="28.3" lengthAdjust="spacingAndGlyphs" font-family="Liberation Sans" font-size="10" font-weight="normal" fill="#5f6670" style="font-style:italic;">Coral</text><text x="396.3" y="261.9" textLength="21.5" lengthAdjust="spacingAndGlyphs" font-family="Liberation Sans" font-size="10" font-weight="normal" fill="#5f6670" style="font-style:italic;">Sea</text><text x="459.0" y="237.1" textLength="34.0" lengthAdjust="spacingAndGlyphs" font-family="Liberation Sans" font-size="8.5" font-weight="bold" fill="#727272" style="">Vanuatu</text><text x="460.0" y="297.3" textLength="30.7" lengthAdjust="spacingAndGlyphs" font-family="Liberation Sans" font-size="8.5" font-weight="bold" fill="#727272" style="">Norfolk</text><text x="462.4" y="309.3" textLength="24.9" lengthAdjust="spacingAndGlyphs" font-family="Liberation Sans" font-size="8.5" font-weight="bold" fill="#727272" style="">Island</text><text x="474.9" y="106.7" textLength="32.9" lengthAdjust="spacingAndGlyphs" font-family="Liberation Sans" font-size="8.5" font-weight="bold" fill="#727272" style="">Marshall</text><text x="477.0" y="118.5" textLength="28.5" lengthAdjust="spacingAndGlyphs" font-family="Liberation Sans" font-size="8.5" font-weight="bold" fill="#727272" style="">Islands</text><text x="570.0" y="146.9" textLength="27.4" lengthAdjust="spacingAndGlyphs" font-family="Liberation Sans" font-size="8.5" font-weight="bold" fill="#727272" style="">Kiribati</text><text x="515.7" y="190.6" textLength="23.1" lengthAdjust="spacingAndGlyphs" font-family="Liberation Sans" font-size="8.5" font-weight="bold" fill="#727272" style="">Tuvalu</text><text x="567.4" y="222.4" textLength="27.2" lengthAdjust="spacingAndGlyphs" font-family="Liberation Sans" font-size="8.5" font-weight="bold" fill="#727272" style="">Samoa</text><text x="528.2" y="245.5" textLength="10.6" lengthAdjust="spacingAndGlyphs" font-family="Liberation Sans" font-size="8.5" font-weight="bold" fill="#727272" style="">Fiji</text><text x="551.5" y="255.3" textLength="26.6" lengthAdjust="spacingAndGlyphs" font-family="Liberation Sans" font-size="8.5" font-weight="bold" fill="#727272" style="">Tonga</text><text x="617.0" y="234.3" textLength="53.0" lengthAdjust="spacingAndGlyphs" font-family="Liberation Sans" font-size="8.5" font-weight="bold" fill="#727272" style="">Cook Islands</text><text x="540.2" y="305.0" textLength="22.0" lengthAdjust="spacingAndGlyphs" font-family="Liberation Sans" font-size="10" font-weight="normal" fill="#5f6670" style="font-style:italic;">tella</text><text x="538.8" y="318.2" textLength="31.8" lengthAdjust="spacingAndGlyphs" font-family="Liberation Sans" font-size="10" font-weight="normal" fill="#5f6670" style="font-style:italic;">ssage</text><text x="701.2" y="173.2" textLength="76.2" lengthAdjust="spacing" font-family="Liberation Sans" font-size="11" font-weight="normal" fill="#5a6470" style="font-style:italic;">PACIFIC</text><text x="708.0" y="190.2" textLength="63.2" lengthAdjust="spacing" font-family="Liberation Sans" font-size="11" font-weight="normal" fill="#5a6470" style="font-style:italic;">OCEAN</text><text x="235.2" y="281.5" textLength="119.1" lengthAdjust="spacing" font-family="Liberation Sans" font-size="12" font-weight="bold" fill="#4a4a4a" style="">AUSTRALIA</text><text x="92.0" y="106.4" textLength="8.0" lengthAdjust="spacingAndGlyphs" font-family="Liberation Sans" font-size="9.5" font-weight="normal" fill="#5f6670" style="font-style:italic;">a</text><rect x="117.2" y="101.8" width="19.8" height="18.8" rx="5" fill="#cc3300"/><path d="M123.3 119.6 L130.9 119.6 L126.8 133.1Z" fill="#cc3300"/><rect x="178.0" y="155.1" width="19.8" height="18.8" rx="5" fill="#cc3300"/><path d="M184.1 172.9 L191.7 172.9 L188.0 185.3Z" fill="#cc3300"/><rect x="570.8" y="165.0" width="20.0" height="20.0" rx="5" fill="#cc3300"/><path d="M577.0 184.0 L584.5 184.0 L580.8 196.2Z" fill="#cc3300"/><rect x="618.8" y="245.0" width="19.5" height="20.0" rx="5" fill="#cc3300"/><path d="M624.7 264.0 L632.3 264.0 L628.8 276.2Z" fill="#cc3300"/><rect x="544.2" y="261.2" width="19.8" height="20.0" rx="5" fill="#cc3300"/><path d="M550.3 280.2 L557.9 280.2 L554.2 292.5Z" fill="#cc3300"/><rect x="815.7" y="240.1" width="19.3" height="18.9" rx="5" fill="#cc3300"/><path d="M821.6 258.0 L829.1 258.0 L825.4 270.9Z" fill="#cc3300"/><rect x="767.8" y="245.0" width="19.3" height="19.7" rx="5" fill="#cc3300"/><path d="M773.7 263.7 L781.2 263.7 L777.4 276.2Z" fill="#cc3300"/><rect x="800.7" y="248.0" width="19.4" height="19.4" rx="5" fill="#cc3300"/><path d="M806.6 266.4 L814.2 266.4 L810.4 278.8Z" fill="#cc3300"/><rect x="783.6" y="269.1" width="19.3" height="19.4" rx="5" fill="#cc3300"/><path d="M789.5 287.5 L797.0 287.5 L793.4 300.4Z" fill="#cc3300"/><rect x="762.0" y="287.6" width="19.8" height="19.4" rx="5" fill="#cc3300"/><path d="M768.1 306.0 L775.7 306.0 L771.7 318.4Z" fill="#cc3300"/><rect x="810.0" y="282.3" width="19.8" height="19.4" rx="5" fill="#cc3300"/><path d="M816.1 300.7 L823.7 300.7 L819.6 313.1Z" fill="#cc3300"/></g><g clip-path="url(#m2)"><rect x="92" y="500" width="560" height="260" fill="#a0c5e2"/><path d="M92.0 500.0 L133.2 500.0 L133.2 516.4 L125.1 524.8 L122.4 537.0 L114.3 545.1 L103.5 553.2 L102.2 561.3 L106.2 570.8 L104.9 577.5 L98.1 568.1 L95.4 560.0 L92.0 558.6Z" fill="#fbf6e4" /><path d="M92.0 587.6 L103.5 587.0 L117.0 591.0 L125.1 596.4 L119.7 597.8 L108.9 592.4 L92.0 589.7Z" fill="#fbf6e4" /><path d="M134.6 600.5 L150.8 601.8 L160.3 604.5 L153.5 607.2 L135.9 607.2Z" fill="#fbf6e4" /><path d="M115.7 603.9 L122.4 604.5 L121.0 606.0 L116.0 605.9Z" fill="#fbf6e4" /><path d="M92.0 616.7 L95.4 618.0 L94.1 630.2 L98.1 639.7 L92.0 637.0Z" fill="#fbf6e4" /><path d="M92.0 634.0 L102.7 641.5 L106.0 645.8 L110.3 640.4 L117.8 644.7 L118.9 639.3 L126.4 632.9 L135.0 630.7 L139.3 634.0 L145.7 632.9 L156.4 632.9 L173.6 635.0 L184.4 642.6 L193.0 647.9 L199.4 652.2 L210.2 653.3 L218.7 658.7 L224.1 668.3 L228.4 678.0 L237.0 681.2 L247.7 684.4 L263.9 686.6 L276.7 694.1 L282.1 701.6 L276.7 714.5 L270.3 723.1 L266.0 760.0 L130.0 760.0 L127.4 734.9 L118.9 721.0 L113.5 708.1 L106.0 697.3 L103.8 693.0 L104.9 689.8 L108.1 684.4 L113.5 670.5 L115.6 655.4 L117.8 648.0 L110.0 646.0 L106.0 648.0 L101.0 645.0 L92.0 638.0Z" fill="#fbf6e4" /><path d="M160.7 660.0 L166.0 657.6 L173.6 664.0 L170.0 675.9 L163.0 673.0Z" fill="#c5dea6" /><path d="M199.4 692.0 L208.0 688.7 L220.9 693.0 L218.0 703.8 L205.0 701.0Z" fill="#c5dea6" /><path d="M205.9 705.0 L216.0 704.0 L218.7 712.0 L214.0 725.3 L208.0 718.0Z" fill="#c5dea6" /><path d="M174.7 651.0 L181.2 650.0 L180.0 656.5 L176.0 656.0Z" fill="#c5dea6" /><path d="M186.0 678.0 L194.0 676.0 L196.0 682.0 L188.0 684.0Z" fill="#c5dea6" /><path d="M130.0 688.0 L136.0 686.0 L138.0 692.0 L131.0 693.0Z" fill="#c5dea6" /><path d="M150.0 708.0 L157.0 705.0 L160.0 712.0 L152.0 714.0Z" fill="#c5dea6" /><path d="M225.0 700.0 L232.0 697.0 L236.0 704.0 L228.0 707.0Z" fill="#c5dea6" /><path d="M240.0 720.0 L246.0 717.0 L248.0 724.0 L242.0 726.0Z" fill="#c5dea6" /><path d="M166.0 690.0 L172.0 688.0 L173.0 694.0 L167.0 695.0Z" fill="#c5dea6" /><path d="M122.0 676.0 L126.0 674.0 L127.0 679.0 L123.0 680.0Z" fill="#c5dea6" /><path d="M383.0 500.0 L652.0 500.0 L652.0 586.3 L645.0 595.6 L633.3 607.3 L615.8 616.6 L592.5 626.0 L586.7 628.3 L586.7 630.6 L610.0 631.8 L614.9 633.0 L608.5 649.2 L593.8 664.0 L579.0 680.9 L570.5 697.8 L568.4 714.7 L566.3 760.0 L465.0 760.0 L465.0 735.0 L469.0 723.0 L467.0 706.0 L463.0 693.0 L461.0 681.0 L454.0 668.0 L446.0 658.0 L433.0 653.0 L412.0 655.0 L389.0 658.0 L370.0 655.0 L362.0 643.0 L350.0 620.0 L352.0 601.0 L354.0 590.0 L360.0 565.4 L371.0 560.0 L384.0 549.0 L392.8 539.2 L397.2 537.0 L389.5 531.5 L383.0 526.0Z" fill="#fbf6e4" /><path d="M604.0 760.0 L611.0 719.0 L614.0 735.0 L613.0 760.0Z" fill="#fbf6e4" /><path d="M396.1 535.9 L409.2 535.3 L421.2 533.1 L436.6 532.0 L450.8 531.0 L456.2 533.1 L458.4 540.2 L457.3 546.8 L469.4 549.0 L480.3 551.2 L491.2 557.2 L496.7 550.1 L507.7 550.1 L518.6 552.3 L535.0 553.9 L545.9 555.6 L550.5 553.7 L555.8 546.8 L557.5 543.2 L557.5 533.8 L554.7 532.6 L540.5 533.7 L524.1 530.4 L518.6 529.3 L507.7 527.1 L502.2 531.5 L491.2 527.1 L485.8 527.1 L482.5 520.6 L469.4 517.3 L458.4 500.0 L421.2 500.0 L421.2 516.0 L416.9 521.7 L408.1 529.3 L397.2 534.2Z" fill="#a0c5e2" /><path d="M450.8 516.0 L455.2 516.0 L455.5 523.8 L451.5 523.0Z" fill="#fbf6e4" /><path d="M467.2 528.0 L478.1 527.0 L476.0 530.4 L469.0 530.4Z" fill="#fbf6e4" /><path d="M496.0 536.0 L506.0 535.5 L505.0 537.5 L497.0 537.5Z" fill="#fbf6e4" /><path d="M608.8 500.0 L629.8 500.0 L626.3 523.3 L626.3 531.5 L620.5 533.2 L610.0 529.2 L607.6 525.7Z" fill="#a0c5e2" /><path d="M544.7 560.7 L547.0 560.7 L555.2 568.8 L566.8 582.8 L572.7 595.6 L579.7 607.3 L585.5 619.0 L586.7 627.0 L583.2 626.0 L575.0 614.3 L565.7 598.0 L557.5 585.1 L549.3 572.3 L543.5 563.0Z" fill="#a0c5e2" /><path d="M604.1 558.3 L612.3 560.7 L621.6 570.0 L633.3 571.1 L639.1 577.0 L652.0 579.3 L652.0 586.3 L645.0 588.6 L636.8 579.3 L624.0 577.0 L614.6 572.3 L606.5 564.2Z" fill="#a0c5e2" /><path d="M540.0 675.0 L546.0 673.0 L547.0 681.0 L541.0 682.0Z" fill="#a0c5e2" /><rect x="447" y="595" width="7" height="9" fill="#c5dea6"/><rect x="517" y="652" width="5" height="5" fill="#c5dea6"/><rect x="540" y="648" width="4" height="4" fill="#c5dea6"/><rect x="505" y="700" width="5" height="4" fill="#c5dea6"/><path d="M385.0 554.3 L384.4 569.8 L368.1 578.9 L368.1 591.9 L352.6 591.9" fill="none" stroke="#cdc6ad" stroke-width="0.8" stroke-linejoin="round"/><path d="M385.0 569.8 L426.5 597.0 L434.3 600.9 L453.7 594.4" fill="none" stroke="#cdc6ad" stroke-width="0.8" stroke-linejoin="round"/><path d="M392.8 578.9 L396.7 615.2 L368.1 615.2" fill="none" stroke="#cdc6ad" stroke-width="0.8" stroke-linejoin="round"/><path d="M453.7 553.0 L456.3 572.4 L464.1 584.1 L479.6 591.9" fill="none" stroke="#cdc6ad" stroke-width="0.8" stroke-linejoin="round"/><path d="M464.1 584.1 L445.9 595.7 L434.3 600.9" fill="none" stroke="#cdc6ad" stroke-width="0.8" stroke-linejoin="round"/><path d="M479.6 591.9 L478.3 612.6 L473.2 623.0" fill="none" stroke="#cdc6ad" stroke-width="0.8" stroke-linejoin="round"/><path d="M514.6 558.1 L514.6 600.9" fill="none" stroke="#cdc6ad" stroke-width="0.8" stroke-linejoin="round"/><path d="M514.6 589.3 L549.0 589.3" fill="none" stroke="#cdc6ad" stroke-width="0.8" stroke-linejoin="round"/><path d="M479.6 591.9 L510.7 600.9 L510.7 617.8" fill="none" stroke="#cdc6ad" stroke-width="0.8" stroke-linejoin="round"/><path d="M434.3 600.9 L433.0 615.2 L420.0 617.8 L417.4 630.7 L399.3 630.7 L380.0 625.0" fill="none" stroke="#cdc6ad" stroke-width="0.8" stroke-linejoin="round"/><path d="M433.0 623.0 L453.7 620.4 L466.7 628.2 L462.8 646.3" fill="none" stroke="#cdc6ad" stroke-width="0.8" stroke-linejoin="round"/><path d="M510.7 617.8 L505.6 633.3 L479.6 643.7 L466.7 638.5" fill="none" stroke="#cdc6ad" stroke-width="0.8" stroke-linejoin="round"/><path d="M474.4 646.3 L516.0 651.5 L551.0 646.3" fill="none" stroke="#cdc6ad" stroke-width="0.8" stroke-linejoin="round"/><path d="M518.5 637.2 L544.5 630.7 L551.0 617.8" fill="none" stroke="#cdc6ad" stroke-width="0.8" stroke-linejoin="round"/><path d="M407.0 633.3 L407.0 654.1" fill="none" stroke="#cdc6ad" stroke-width="0.8" stroke-linejoin="round"/><path d="M420.0 633.3 L422.6 651.5" fill="none" stroke="#cdc6ad" stroke-width="0.8" stroke-linejoin="round"/><path d="M395.0 630.0 L393.0 648.0" fill="none" stroke="#cdc6ad" stroke-width="0.8" stroke-linejoin="round"/><path d="M470.0 660.0 L490.0 662.0 L492.0 690.0 L480.0 705.0 L500.0 720.0" fill="none" stroke="#cdc6ad" stroke-width="0.8" stroke-linejoin="round"/><path d="M520.0 655.0 L518.0 690.0 L530.0 705.0 L545.0 700.0" fill="none" stroke="#cdc6ad" stroke-width="0.8" stroke-linejoin="round"/><path d="M545.0 640.0 L560.0 650.0 L575.0 660.0" fill="none" stroke="#cdc6ad" stroke-width="0.8" stroke-linejoin="round"/><path d="M580.0 590.0 L600.0 600.0 L625.0 605.0" fill="none" stroke="#cdc6ad" stroke-width="0.8" stroke-linejoin="round"/><path d="M560.0 575.0 L590.0 590.0" fill="none" stroke="#cdc6ad" stroke-width="0.8" stroke-linejoin="round"/><path d="M135.0 636.0 L139.0 655.0 L150.0 660.0 L165.0 658.0 L185.0 665.0" fill="none" stroke="#cdc6ad" stroke-width="0.8" stroke-linejoin="round"/><path d="M115.0 668.0 L130.0 672.0 L150.0 690.0 L170.0 705.0 L190.0 735.0" fill="none" stroke="#cdc6ad" stroke-width="0.8" stroke-linejoin="round"/><path d="M190.0 650.0 L195.0 665.0 L210.0 668.0" fill="none" stroke="#cdc6ad" stroke-width="0.8" stroke-linejoin="round"/><path d="M130.0 690.0 L140.0 700.0 L145.0 735.0" fill="none" stroke="#cdc6ad" stroke-width="0.8" stroke-linejoin="round"/><text x="167.0" y="558.4" textLength="38.0" lengthAdjust="spacingAndGlyphs" font-family="Liberation Sans" font-size="8.5" font-weight="normal" fill="#5f6670" style="font-style:italic;">Sargasso</text><text x="178.7" y="566.8" textLength="14.8" lengthAdjust="spacingAndGlyphs" font-family="Liberation Sans" font-size="8.5" font-weight="normal" fill="#5f6670" style="font-style:italic;">Sea</text><text x="95.9" y="590.1" textLength="19.0" lengthAdjust="spacingAndGlyphs" font-family="Liberation Sans" font-size="8.5" font-weight="bold" fill="#727272" style="">Cuba</text><text x="127.0" y="600.1" textLength="38.0" lengthAdjust="spacingAndGlyphs" font-family="Liberation Sans" font-size="8.5" font-weight="bold" fill="#727272" style="">Dominican</text><text x="130.1" y="610.1" textLength="31.7" lengthAdjust="spacingAndGlyphs" font-family="Liberation Sans" font-size="8.5" font-weight="bold" fill="#727272" style="">Republic</text><text x="219.9" y="594.8" textLength="67.5" lengthAdjust="spacing" font-family="Liberation Sans" font-size="9" font-weight="normal" fill="#5a6470" style="font-style:italic;">ATLANTIC</text><text x="231.0" y="606.6" textLength="45.9" lengthAdjust="spacing" font-family="Liberation Sans" font-size="9" font-weight="normal" fill="#5a6470" style="font-style:italic;">OCEAN</text><text x="138.6" y="631.3" textLength="24.2" lengthAdjust="spacingAndGlyphs" font-family="Liberation Sans" font-size="7" font-weight="bold" fill="#727272" style="">Curaçao</text><text x="173.4" y="627.5" textLength="28.5" lengthAdjust="spacingAndGlyphs" font-family="Liberation Sans" font-size="7" font-weight="bold" fill="#727272" style="">Barbados</text><text x="143.8" y="648.1" textLength="37.0" lengthAdjust="spacingAndGlyphs" font-family="Liberation Sans" font-size="8.5" font-weight="bold" fill="#727272" style="">Venezuela</text><text x="187.1" y="662.7" textLength="27.5" lengthAdjust="spacingAndGlyphs" font-family="Liberation Sans" font-size="7" font-weight="bold" fill="#727272" style="">Suriname</text><text x="115.3" y="667.6" textLength="33.8" lengthAdjust="spacingAndGlyphs" font-family="Liberation Sans" font-size="8.5" font-weight="bold" fill="#727272" style="">Colombia</text><text x="95.9" y="684.0" textLength="28.9" lengthAdjust="spacingAndGlyphs" font-family="Liberation Sans" font-size="8.5" font-weight="bold" fill="#727272" style="">Ecuador</text><text x="118.5" y="705.6" textLength="16.9" lengthAdjust="spacingAndGlyphs" font-family="Liberation Sans" font-size="8.5" font-weight="bold" fill="#727272" style="">Peru</text><text x="200.9" y="719.8" textLength="23.2" lengthAdjust="spacingAndGlyphs" font-family="Liberation Sans" font-size="10" font-weight="bold" fill="#727272" style="">Brazil</text><text x="347.6" y="623.2" textLength="29.1" lengthAdjust="spacingAndGlyphs" font-family="Liberation Sans" font-size="8.5" font-weight="bold" fill="#727272" style="">Senegal</text><text x="362.4" y="600.6" textLength="39.3" lengthAdjust="spacingAndGlyphs" font-family="Liberation Sans" font-size="8.5" font-weight="bold" fill="#727272" style="">Mauritania</text><text x="360.3" y="640.8" textLength="21.9" lengthAdjust="spacingAndGlyphs" font-family="Liberation Sans" font-size="8.5" font-weight="bold" fill="#727272" style="">Sierra</text><text x="360.3" y="651.0" textLength="23.7" lengthAdjust="spacingAndGlyphs" font-family="Liberation Sans" font-size="8.5" font-weight="bold" fill="#727272" style="">Leone</text><text x="392.2" y="524.0" textLength="20.0" lengthAdjust="spacingAndGlyphs" font-family="Liberation Sans" font-size="8.5" font-weight="bold" fill="#727272" style="">Spain</text><text x="491.4" y="527.8" textLength="24.3" lengthAdjust="spacingAndGlyphs" font-family="Liberation Sans" font-size="8.5" font-weight="bold" fill="#727272" style="">Greece</text><text x="541.0" y="528.2" textLength="24.3" lengthAdjust="spacingAndGlyphs" font-family="Liberation Sans" font-size="8.5" font-weight="bold" fill="#727272" style="">Turkey</text><text x="584.3" y="523.5" textLength="38.0" lengthAdjust="spacingAndGlyphs" font-family="Liberation Sans" font-size="8.5" font-weight="bold" fill="#727272" style="">Azerbaijan</text><text x="467.1" y="538.3" textLength="57.0" lengthAdjust="spacingAndGlyphs" font-family="Liberation Sans" font-size="8.5" font-weight="normal" fill="#5f6670" style="font-style:italic;">Mediterranean</text><text x="488.2" y="547.8" textLength="15.8" lengthAdjust="spacingAndGlyphs" font-family="Liberation Sans" font-size="8.5" font-weight="normal" fill="#5f6670" style="font-style:italic;">Sea</text><text x="441.8" y="547.8" textLength="26.4" lengthAdjust="spacingAndGlyphs" font-family="Liberation Sans" font-size="8.5" font-weight="bold" fill="#727272" style="">Tunisia</text><text x="535.7" y="543.0" textLength="21.1" lengthAdjust="spacingAndGlyphs" font-family="Liberation Sans" font-size="7" font-weight="bold" fill="#727272" style="">Cyprus</text><text x="374.2" y="558.4" textLength="30.6" lengthAdjust="spacingAndGlyphs" font-family="Liberation Sans" font-size="8.5" font-weight="bold" fill="#727272" style="">Morocco</text><text x="417.5" y="570.4" textLength="25.3" lengthAdjust="spacingAndGlyphs" font-family="Liberation Sans" font-size="8.5" font-weight="bold" fill="#727272" style="">Algeria</text><text x="544.2" y="559.4" textLength="19.0" lengthAdjust="spacingAndGlyphs" font-family="Liberation Sans" font-size="8.5" font-weight="bold" fill="#727272" style="">Israel</text><text x="582.2" y="551.0" textLength="12.6" lengthAdjust="spacingAndGlyphs" font-family="Liberation Sans" font-size="8.5" font-weight="bold" fill="#727272" style="">Iraq</text><text x="615.9" y="551.4" textLength="13.8" lengthAdjust="spacingAndGlyphs" font-family="Liberation Sans" font-size="8.5" font-weight="bold" fill="#727272" style="">Iran</text><text x="478.7" y="575.3" textLength="19.0" lengthAdjust="spacingAndGlyphs" font-family="Liberation Sans" font-size="8.5" font-weight="bold" fill="#727272" style="">Libya</text><text x="520.9" y="577.4" textLength="21.1" lengthAdjust="spacingAndGlyphs" font-family="Liberation Sans" font-size="8.5" font-weight="bold" fill="#727272" style="">Egypt</text><text x="571.6" y="574.6" textLength="20.1" lengthAdjust="spacingAndGlyphs" font-family="Liberation Sans" font-size="8.5" font-weight="bold" fill="#727272" style="">Saudi</text><text x="570.5" y="584.8" textLength="23.3" lengthAdjust="spacingAndGlyphs" font-family="Liberation Sans" font-size="8.5" font-weight="bold" fill="#727272" style="">Arabia</text><text x="615.9" y="580.5" textLength="22.2" lengthAdjust="spacingAndGlyphs" font-family="Liberation Sans" font-size="8.5" font-weight="bold" fill="#727272" style="">United</text><text x="602.2" y="591.1" textLength="49.6" lengthAdjust="spacingAndGlyphs" font-family="Liberation Sans" font-size="8.5" font-weight="bold" fill="#727272" style="">Arab Emirates</text><text x="554.7" y="605.2" textLength="33.8" lengthAdjust="spacingAndGlyphs" font-family="Liberation Sans" font-size="8.5" font-weight="normal" fill="#5f6670" style="font-style:italic;">Red Sea</text><text x="401.7" y="615.4" textLength="14.7" lengthAdjust="spacingAndGlyphs" font-family="Liberation Sans" font-size="8.5" font-weight="bold" fill="#727272" style="">Mali</text><text x="553.7" y="617.5" textLength="23.2" lengthAdjust="spacingAndGlyphs" font-family="Liberation Sans" font-size="8.5" font-weight="bold" fill="#727272" style="">Eritrea</text><text x="591.7" y="615.8" textLength="24.2" lengthAdjust="spacingAndGlyphs" font-family="Liberation Sans" font-size="8.5" font-weight="bold" fill="#727272" style="">Yemen</text><text x="453.4" y="626.2" textLength="54.9" lengthAdjust="spacing" font-family="Liberation Sans" font-size="9.5" font-weight="bold" fill="#555" style="">AFRICA</text><text x="520.9" y="622.3" textLength="23.3" lengthAdjust="spacingAndGlyphs" font-family="Liberation Sans" font-size="8.5" font-weight="bold" fill="#727272" style="">Sudan</text><text x="552.6" y="639.6" textLength="30.6" lengthAdjust="spacingAndGlyphs" font-family="Liberation Sans" font-size="8.5" font-weight="bold" fill="#727272" style="">Ethiopia</text><text x="593.8" y="647.0" textLength="28.5" lengthAdjust="spacingAndGlyphs" font-family="Liberation Sans" font-size="8.5" font-weight="bold" fill="#727272" style="">Somalia</text><text x="437.1" y="641.8" textLength="24.1" lengthAdjust="spacingAndGlyphs" font-family="Liberation Sans" font-size="8.5" font-weight="bold" fill="#727272" style="">Nigeria</text><text x="402.1" y="647.7" textLength="23.8" lengthAdjust="spacingAndGlyphs" font-family="Liberation Sans" font-size="8.5" font-weight="bold" fill="#727272" style="">Ghana</text><text x="450.2" y="661.2" textLength="37.0" lengthAdjust="spacingAndGlyphs" font-family="Liberation Sans" font-size="8.5" font-weight="bold" fill="#727272" style="">Cameroon</text><text x="489.9" y="675.5" textLength="40.5" lengthAdjust="spacingAndGlyphs" font-family="Liberation Sans" font-size="8.5" font-weight="bold" fill="#727272" style="">Democratic</text><text x="494.6" y="685.7" textLength="31.6" lengthAdjust="spacingAndGlyphs" font-family="Liberation Sans" font-size="8.5" font-weight="bold" fill="#727272" style="">Republic</text><text x="499.8" y="695.6" textLength="21.1" lengthAdjust="spacingAndGlyphs" font-family="Liberation Sans" font-size="8.5" font-weight="bold" fill="#727272" style="">of the</text><text x="497.7" y="706.1" textLength="24.3" lengthAdjust="spacingAndGlyphs" font-family="Liberation Sans" font-size="8.5" font-weight="bold" fill="#727272" style="">Congo</text><text x="451.3" y="682.5" textLength="23.2" lengthAdjust="spacingAndGlyphs" font-family="Liberation Sans" font-size="8.5" font-weight="bold" fill="#727272" style="">Gabon</text><text x="555.8" y="673.4" textLength="22.1" lengthAdjust="spacingAndGlyphs" font-family="Liberation Sans" font-size="8.5" font-weight="bold" fill="#727272" style="">Kenya</text><text x="540.6" y="704.5" textLength="32.1" lengthAdjust="spacingAndGlyphs" font-family="Liberation Sans" font-size="8.5" font-weight="bold" fill="#727272" style="">Tanzania</text><text x="617.0" y="696.5" textLength="30.6" lengthAdjust="spacingAndGlyphs" font-family="Liberation Sans" font-size="7" font-weight="bold" fill="#727272" style="">Seychelles</text><text x="473.4" y="724.7" textLength="25.4" lengthAdjust="spacingAndGlyphs" font-family="Liberation Sans" font-size="8.5" font-weight="bold" fill="#727272" style="">Angola</text><text x="536.8" y="730.4" textLength="25.3" lengthAdjust="spacingAndGlyphs" font-family="Liberation Sans" font-size="8.5" font-weight="bold" fill="#727272" style="">Malawi</text><text x="575.8" y="725.6" textLength="27.5" lengthAdjust="spacingAndGlyphs" font-family="Liberation Sans" font-size="7" font-weight="bold" fill="#727272" style="">Comoros</text><text x="92.0" y="636.1" textLength="12.0" lengthAdjust="spacingAndGlyphs" font-family="Liberation Sans" font-size="8.5" font-weight="bold" fill="#727272" style="">sta</text><text x="92.0" y="646.1" textLength="7.0" lengthAdjust="spacingAndGlyphs" font-family="Liberation Sans" font-size="8.5" font-weight="bold" fill="#727272" style="">ca</text><path d="M117.5 682.0 C123.1 676.2 140.3 656.4 151.2 647.1 C162.1 637.8 168.5 635.1 182.9 626.0 C197.3 616.9 218.1 603.1 237.8 592.2 C257.5 581.3 279.1 569.7 301.1 560.6 C323.1 551.5 344.4 543.5 370.0 537.8 C395.6 532.1 433.3 528.4 454.4 526.4 C475.5 524.4 482.6 525.3 496.7 525.7 C510.8 526.1 524.8 526.6 538.9 528.9 C553.0 531.2 567.4 535.7 581.1 539.4 C594.8 543.1 614.5 549.1 621.2 551.0" fill="none" stroke="#111" stroke-width="1.1"/><path d="M117.5 682.0 C123.5 676.5 142.1 658.4 153.3 649.2 C164.6 640.1 170.9 635.2 185.0 627.1 C199.1 619.0 218.5 609.3 237.8 600.7 C257.2 592.1 279.1 581.9 301.1 575.3 C323.1 568.7 348.0 564.7 370.0 561.0 C392.0 557.3 415.7 554.5 433.3 553.2 C450.9 551.9 458.0 552.3 475.6 553.2 C493.2 554.1 521.3 555.8 538.9 558.4 C556.5 561.0 566.7 565.1 581.1 569.0 C595.5 572.9 618.0 579.6 625.4 581.7" fill="none" stroke="#111" stroke-width="1.1"/><path d="M117.5 682.0 C130.5 685.0 168.5 694.7 195.6 700.0 C222.7 705.3 250.9 709.8 280.0 713.6 C309.1 717.5 348.0 721.2 370.0 723.1 C392.0 725.0 392.5 725.4 412.2 725.2 C431.9 725.0 475.5 722.5 488.2 722.0" fill="none" stroke="#111" stroke-width="1.1"/><path d="M430.2 568.0 L488.2 722.0" fill="none" stroke="#111" stroke-width="1.1" stroke-linejoin="round"/><path d="M448.1 635.5 L484.0 577.4" fill="none" stroke="#111" stroke-width="1.1" stroke-linejoin="round"/><path d="M484.0 577.4 C493.3 575.8 520.3 570.8 540.0 568.0 C559.7 565.2 591.8 561.8 602.2 560.6" fill="none" stroke="#111" stroke-width="1.1"/><path d="M448.1 635.5 C459.7 630.4 497.1 613.5 517.8 604.9 C538.4 596.3 554.1 588.0 572.0 584.0 C589.9 580.0 616.5 581.2 625.4 580.6" fill="none" stroke="#111" stroke-width="1.1"/><path d="M621.2 551.0 L587.4 546.8 L602.2 560.6 L621.2 551.0" fill="none" stroke="#111" stroke-width="1.1" stroke-linejoin="round"/></g><g clip-path="url(#m3)"><g transform="translate(0,306.5)"><rect x="92" y="500" width="560" height="260" fill="#a0c5e2"/><path d="M92.0 500.0 L133.2 500.0 L133.2 516.4 L125.1 524.8 L122.4 537.0 L114.3 545.1 L103.5 553.2 L102.2 561.3 L106.2 570.8 L104.9 577.5 L98.1 568.1 L95.4 560.0 L92.0 558.6Z" fill="#fbf6e4" /><path d="M92.0 587.6 L103.5 587.0 L117.0 591.0 L125.1 596.4 L119.7 597.8 L108.9 592.4 L92.0 589.7Z" fill="#fbf6e4" /><path d="M134.6 600.5 L150.8 601.8 L160.3 604.5 L153.5 607.2 L135.9 607.2Z" fill="#fbf6e4" /><path d="M115.7 603.9 L122.4 604.5 L121.0 606.0 L116.0 605.9Z" fill="#fbf6e4" /><path d="M92.0 616.7 L95.4 618.0 L94.1 630.2 L98.1 639.7 L92.0 637.0Z" fill="#fbf6e4" /><path d="M92.0 634.0 L102.7 641.5 L106.0 645.8 L110.3 640.4 L117.8 644.7 L118.9 639.3 L126.4 632.9 L135.0 630.7 L139.3 634.0 L145.7 632.9 L156.4 632.9 L173.6 635.0 L184.4 642.6 L193.0 647.9 L199.4 652.2 L210.2 653.3 L218.7 658.7 L224.1 668.3 L228.4 678.0 L237.0 681.2 L247.7 684.4 L263.9 686.6 L276.7 694.1 L282.1 701.6 L276.7 714.5 L270.3 723.1 L266.0 760.0 L130.0 760.0 L127.4 734.9 L118.9 721.0 L113.5 708.1 L106.0 697.3 L103.8 693.0 L104.9 689.8 L108.1 684.4 L113.5 670.5 L115.6 655.4 L117.8 648.0 L110.0 646.0 L106.0 648.0 L101.0 645.0 L92.0 638.0Z" fill="#fbf6e4" /><path d="M160.7 660.0 L166.0 657.6 L173.6 664.0 L170.0 675.9 L163.0 673.0Z" fill="#c5dea6" /><path d="M199.4 692.0 L208.0 688.7 L220.9 693.0 L218.0 703.8 L205.0 701.0Z" fill="#c5dea6" /><path d="M205.9 705.0 L216.0 704.0 L218.7 712.0 L214.0 725.3 L208.0 718.0Z" fill="#c5dea6" /><path d="M174.7 651.0 L181.2 650.0 L180.0 656.5 L176.0 656.0Z" fill="#c5dea6" /><path d="M186.0 678.0 L194.0 676.0 L196.0 682.0 L188.0 684.0Z" fill="#c5dea6" /><path d="M130.0 688.0 L136.0 686.0 L138.0 692.0 L131.0 693.0Z" fill="#c5dea6" /><path d="M150.0 708.0 L157.0 705.0 L160.0 712.0 L152.0 714.0Z" fill="#c5dea6" /><path d="M225.0 700.0 L232.0 697.0 L236.0 704.0 L228.0 707.0Z" fill="#c5dea6" /><path d="M240.0 720.0 L246.0 717.0 L248.0 724.0 L242.0 726.0Z" fill="#c5dea6" /><path d="M166.0 690.0 L172.0 688.0 L173.0 694.0 L167.0 695.0Z" fill="#c5dea6" /><path d="M122.0 676.0 L126.0 674.0 L127.0 679.0 L123.0 680.0Z" fill="#c5dea6" /><path d="M383.0 500.0 L652.0 500.0 L652.0 586.3 L645.0 595.6 L633.3 607.3 L615.8 616.6 L592.5 626.0 L586.7 628.3 L586.7 630.6 L610.0 631.8 L614.9 633.0 L608.5 649.2 L593.8 664.0 L579.0 680.9 L570.5 697.8 L568.4 714.7 L566.3 760.0 L465.0 760.0 L465.0 735.0 L469.0 723.0 L467.0 706.0 L463.0 693.0 L461.0 681.0 L454.0 668.0 L446.0 658.0 L433.0 653.0 L412.0 655.0 L389.0 658.0 L370.0 655.0 L362.0 643.0 L350.0 620.0 L352.0 601.0 L354.0 590.0 L360.0 565.4 L371.0 560.0 L384.0 549.0 L392.8 539.2 L397.2 537.0 L389.5 531.5 L383.0 526.0Z" fill="#fbf6e4" /><path d="M604.0 760.0 L611.0 719.0 L614.0 735.0 L613.0 760.0Z" fill="#fbf6e4" /><path d="M396.1 535.9 L409.2 535.3 L421.2 533.1 L436.6 532.0 L450.8 531.0 L456.2 533.1 L458.4 540.2 L457.3 546.8 L469.4 549.0 L480.3 551.2 L491.2 557.2 L496.7 550.1 L507.7 550.1 L518.6 552.3 L535.0 553.9 L545.9 555.6 L550.5 553.7 L555.8 546.8 L557.5 543.2 L557.5 533.8 L554.7 532.6 L540.5 533.7 L524.1 530.4 L518.6 529.3 L507.7 527.1 L502.2 531.5 L491.2 527.1 L485.8 527.1 L482.5 520.6 L469.4 517.3 L458.4 500.0 L421.2 500.0 L421.2 516.0 L416.9 521.7 L408.1 529.3 L397.2 534.2Z" fill="#a0c5e2" /><path d="M450.8 516.0 L455.2 516.0 L455.5 523.8 L451.5 523.0Z" fill="#fbf6e4" /><path d="M467.2 528.0 L478.1 527.0 L476.0 530.4 L469.0 530.4Z" fill="#fbf6e4" /><path d="M496.0 536.0 L506.0 535.5 L505.0 537.5 L497.0 537.5Z" fill="#fbf6e4" /><path d="M608.8 500.0 L629.8 500.0 L626.3 523.3 L626.3 531.5 L620.5 533.2 L610.0 529.2 L607.6 525.7Z" fill="#a0c5e2" /><path d="M544.7 560.7 L547.0 560.7 L555.2 568.8 L566.8 582.8 L572.7 595.6 L579.7 607.3 L585.5 619.0 L586.7 627.0 L583.2 626.0 L575.0 614.3 L565.7 598.0 L557.5 585.1 L549.3 572.3 L543.5 563.0Z" fill="#a0c5e2" /><path d="M604.1 558.3 L612.3 560.7 L621.6 570.0 L633.3 571.1 L639.1 577.0 L652.0 579.3 L652.0 586.3 L645.0 588.6 L636.8 579.3 L624.0 577.0 L614.6 572.3 L606.5 564.2Z" fill="#a0c5e2" /><path d="M540.0 675.0 L546.0 673.0 L547.0 681.0 L541.0 682.0Z" fill="#a0c5e2" /><rect x="447" y="595" width="7" height="9" fill="#c5dea6"/><rect x="517" y="652" width="5" height="5" fill="#c5dea6"/><rect x="540" y="648" width="4" height="4" fill="#c5dea6"/><rect x="505" y="700" width="5" height="4" fill="#c5dea6"/><path d="M385.0 554.3 L384.4 569.8 L368.1 578.9 L368.1 591.9 L352.6 591.9" fill="none" stroke="#cdc6ad" stroke-width="0.8" stroke-linejoin="round"/><path d="M385.0 569.8 L426.5 597.0 L434.3 600.9 L453.7 594.4" fill="none" stroke="#cdc6ad" stroke-width="0.8" stroke-linejoin="round"/><path d="M392.8 578.9 L396.7 615.2 L368.1 615.2" fill="none" stroke="#cdc6ad" stroke-width="0.8" stroke-linejoin="round"/><path d="M453.7 553.0 L456.3 572.4 L464.1 584.1 L479.6 591.9" fill="none" stroke="#cdc6ad" stroke-width="0.8" stroke-linejoin="round"/><path d="M464.1 584.1 L445.9 595.7 L434.3 600.9" fill="none" stroke="#cdc6ad" stroke-width="0.8" stroke-linejoin="round"/><path d="M479.6 591.9 L478.3 612.6 L473.2 623.0" fill="none" stroke="#cdc6ad" stroke-width="0.8" stroke-linejoin="round"/><path d="M514.6 558.1 L514.6 600.9" fill="none" stroke="#cdc6ad" stroke-width="0.8" stroke-linejoin="round"/><path d="M514.6 589.3 L549.0 589.3" fill="none" stroke="#cdc6ad" stroke-width="0.8" stroke-linejoin="round"/><path d="M479.6 591.9 L510.7 600.9 L510.7 617.8" fill="none" stroke="#cdc6ad" stroke-width="0.8" stroke-linejoin="round"/><path d="M434.3 600.9 L433.0 615.2 L420.0 617.8 L417.4 630.7 L399.3 630.7 L380.0 625.0" fill="none" stroke="#cdc6ad" stroke-width="0.8" stroke-linejoin="round"/><path d="M433.0 623.0 L453.7 620.4 L466.7 628.2 L462.8 646.3" fill="none" stroke="#cdc6ad" stroke-width="0.8" stroke-linejoin="round"/><path d="M510.7 617.8 L505.6 633.3 L479.6 643.7 L466.7 638.5" fill="none" stroke="#cdc6ad" stroke-width="0.8" stroke-linejoin="round"/><path d="M474.4 646.3 L516.0 651.5 L551.0 646.3" fill="none" stroke="#cdc6ad" stroke-width="0.8" stroke-linejoin="round"/><path d="M518.5 637.2 L544.5 630.7 L551.0 617.8" fill="none" stroke="#cdc6ad" stroke-width="0.8" stroke-linejoin="round"/><path d="M407.0 633.3 L407.0 654.1" fill="none" stroke="#cdc6ad" stroke-width="0.8" stroke-linejoin="round"/><path d="M420.0 633.3 L422.6 651.5" fill="none" stroke="#cdc6ad" stroke-width="0.8" stroke-linejoin="round"/><path d="M395.0 630.0 L393.0 648.0" fill="none" stroke="#cdc6ad" stroke-width="0.8" stroke-linejoin="round"/><path d="M470.0 660.0 L490.0 662.0 L492.0 690.0 L480.0 705.0 L500.0 720.0" fill="none" stroke="#cdc6ad" stroke-width="0.8" stroke-linejoin="round"/><path d="M520.0 655.0 L518.0 690.0 L530.0 705.0 L545.0 700.0" fill="none" stroke="#cdc6ad" stroke-width="0.8" stroke-linejoin="round"/><path d="M545.0 640.0 L560.0 650.0 L575.0 660.0" fill="none" stroke="#cdc6ad" stroke-width="0.8" stroke-linejoin="round"/><path d="M580.0 590.0 L600.0 600.0 L625.0 605.0" fill="none" stroke="#cdc6ad" stroke-width="0.8" stroke-linejoin="round"/><path d="M560.0 575.0 L590.0 590.0" fill="none" stroke="#cdc6ad" stroke-width="0.8" stroke-linejoin="round"/><path d="M135.0 636.0 L139.0 655.0 L150.0 660.0 L165.0 658.0 L185.0 665.0" fill="none" stroke="#cdc6ad" stroke-width="0.8" stroke-linejoin="round"/><path d="M115.0 668.0 L130.0 672.0 L150.0 690.0 L170.0 705.0 L190.0 735.0" fill="none" stroke="#cdc6ad" stroke-width="0.8" stroke-linejoin="round"/><path d="M190.0 650.0 L195.0 665.0 L210.0 668.0" fill="none" stroke="#cdc6ad" stroke-width="0.8" stroke-linejoin="round"/><path d="M130.0 690.0 L140.0 700.0 L145.0 735.0" fill="none" stroke="#cdc6ad" stroke-width="0.8" stroke-linejoin="round"/><text x="167.0" y="558.4" textLength="38.0" lengthAdjust="spacingAndGlyphs" font-family="Liberation Sans" font-size="8.5" font-weight="normal" fill="#5f6670" style="font-style:italic;">Sargasso</text><text x="178.7" y="566.8" textLength="14.8" lengthAdjust="spacingAndGlyphs" font-family="Liberation Sans" font-size="8.5" font-weight="normal" fill="#5f6670" style="font-style:italic;">Sea</text><text x="95.9" y="590.1" textLength="19.0" lengthAdjust="spacingAndGlyphs" font-family="Liberation Sans" font-size="8.5" font-weight="bold" fill="#727272" style="">Cuba</text><text x="127.0" y="600.1" textLength="38.0" lengthAdjust="spacingAndGlyphs" font-family="Liberation Sans" font-size="8.5" font-weight="bold" fill="#727272" style="">Dominican</text><text x="130.1" y="610.1" textLength="31.7" lengthAdjust="spacingAndGlyphs" font-family="Liberation Sans" font-size="8.5" font-weight="bold" fill="#727272" style="">Republic</text><text x="219.9" y="594.8" textLength="67.5" lengthAdjust="spacing" font-family="Liberation Sans" font-size="9" font-weight="normal" fill="#5a6470" style="font-style:italic;">ATLANTIC</text><text x="231.0" y="606.6" textLength="45.9" lengthAdjust="spacing" font-family="Liberation Sans" font-size="9" font-weight="normal" fill="#5a6470" style="font-style:italic;">OCEAN</text><text x="138.6" y="631.3" textLength="24.2" lengthAdjust="spacingAndGlyphs" font-family="Liberation Sans" font-size="7" font-weight="bold" fill="#727272" style="">Curaçao</text><text x="173.4" y="627.5" textLength="28.5" lengthAdjust="spacingAndGlyphs" font-family="Liberation Sans" font-size="7" font-weight="bold" fill="#727272" style="">Barbados</text><text x="143.8" y="648.1" textLength="37.0" lengthAdjust="spacingAndGlyphs" font-family="Liberation Sans" font-size="8.5" font-weight="bold" fill="#727272" style="">Venezuela</text><text x="187.1" y="662.7" textLength="27.5" lengthAdjust="spacingAndGlyphs" font-family="Liberation Sans" font-size="7" font-weight="bold" fill="#727272" style="">Suriname</text><text x="115.3" y="667.6" textLength="33.8" lengthAdjust="spacingAndGlyphs" font-family="Liberation Sans" font-size="8.5" font-weight="bold" fill="#727272" style="">Colombia</text><text x="95.9" y="684.0" textLength="28.9" lengthAdjust="spacingAndGlyphs" font-family="Liberation Sans" font-size="8.5" font-weight="bold" fill="#727272" style="">Ecuador</text><text x="118.5" y="705.6" textLength="16.9" lengthAdjust="spacingAndGlyphs" font-family="Liberation Sans" font-size="8.5" font-weight="bold" fill="#727272" style="">Peru</text><text x="200.9" y="719.8" textLength="23.2" lengthAdjust="spacingAndGlyphs" font-family="Liberation Sans" font-size="10" font-weight="bold" fill="#727272" style="">Brazil</text><text x="347.6" y="623.2" textLength="29.1" lengthAdjust="spacingAndGlyphs" font-family="Liberation Sans" font-size="8.5" font-weight="bold" fill="#727272" style="">Senegal</text><text x="362.4" y="600.6" textLength="39.3" lengthAdjust="spacingAndGlyphs" font-family="Liberation Sans" font-size="8.5" font-weight="bold" fill="#727272" style="">Mauritania</text><text x="360.3" y="640.8" textLength="21.9" lengthAdjust="spacingAndGlyphs" font-family="Liberation Sans" font-size="8.5" font-weight="bold" fill="#727272" style="">Sierra</text><text x="360.3" y="651.0" textLength="23.7" lengthAdjust="spacingAndGlyphs" font-family="Liberation Sans" font-size="8.5" font-weight="bold" fill="#727272" style="">Leone</text><text x="392.2" y="524.0" textLength="20.0" lengthAdjust="spacingAndGlyphs" font-family="Liberation Sans" font-size="8.5" font-weight="bold" fill="#727272" style="">Spain</text><text x="491.4" y="527.8" textLength="24.3" lengthAdjust="spacingAndGlyphs" font-family="Liberation Sans" font-size="8.5" font-weight="bold" fill="#727272" style="">Greece</text><text x="541.0" y="528.2" textLength="24.3" lengthAdjust="spacingAndGlyphs" font-family="Liberation Sans" font-size="8.5" font-weight="bold" fill="#727272" style="">Turkey</text><text x="584.3" y="523.5" textLength="38.0" lengthAdjust="spacingAndGlyphs" font-family="Liberation Sans" font-size="8.5" font-weight="bold" fill="#727272" style="">Azerbaijan</text><text x="467.1" y="538.3" textLength="57.0" lengthAdjust="spacingAndGlyphs" font-family="Liberation Sans" font-size="8.5" font-weight="normal" fill="#5f6670" style="font-style:italic;">Mediterranean</text><text x="488.2" y="547.8" textLength="15.8" lengthAdjust="spacingAndGlyphs" font-family="Liberation Sans" font-size="8.5" font-weight="normal" fill="#5f6670" style="font-style:italic;">Sea</text><text x="441.8" y="547.8" textLength="26.4" lengthAdjust="spacingAndGlyphs" font-family="Liberation Sans" font-size="8.5" font-weight="bold" fill="#727272" style="">Tunisia</text><text x="535.7" y="543.0" textLength="21.1" lengthAdjust="spacingAndGlyphs" font-family="Liberation Sans" font-size="7" font-weight="bold" fill="#727272" style="">Cyprus</text><text x="374.2" y="558.4" textLength="30.6" lengthAdjust="spacingAndGlyphs" font-family="Liberation Sans" font-size="8.5" font-weight="bold" fill="#727272" style="">Morocco</text><text x="417.5" y="570.4" textLength="25.3" lengthAdjust="spacingAndGlyphs" font-family="Liberation Sans" font-size="8.5" font-weight="bold" fill="#727272" style="">Algeria</text><text x="544.2" y="559.4" textLength="19.0" lengthAdjust="spacingAndGlyphs" font-family="Liberation Sans" font-size="8.5" font-weight="bold" fill="#727272" style="">Israel</text><text x="582.2" y="551.0" textLength="12.6" lengthAdjust="spacingAndGlyphs" font-family="Liberation Sans" font-size="8.5" font-weight="bold" fill="#727272" style="">Iraq</text><text x="615.9" y="551.4" textLength="13.8" lengthAdjust="spacingAndGlyphs" font-family="Liberation Sans" font-size="8.5" font-weight="bold" fill="#727272" style="">Iran</text><text x="478.7" y="575.3" textLength="19.0" lengthAdjust="spacingAndGlyphs" font-family="Liberation Sans" font-size="8.5" font-weight="bold" fill="#727272" style="">Libya</text><text x="520.9" y="577.4" textLength="21.1" lengthAdjust="spacingAndGlyphs" font-family="Liberation Sans" font-size="8.5" font-weight="bold" fill="#727272" style="">Egypt</text><text x="571.6" y="574.6" textLength="20.1" lengthAdjust="spacingAndGlyphs" font-family="Liberation Sans" font-size="8.5" font-weight="bold" fill="#727272" style="">Saudi</text><text x="570.5" y="584.8" textLength="23.3" lengthAdjust="spacingAndGlyphs" font-family="Liberation Sans" font-size="8.5" font-weight="bold" fill="#727272" style="">Arabia</text><text x="615.9" y="580.5" textLength="22.2" lengthAdjust="spacingAndGlyphs" font-family="Liberation Sans" font-size="8.5" font-weight="bold" fill="#727272" style="">United</text><text x="602.2" y="591.1" textLength="49.6" lengthAdjust="spacingAndGlyphs" font-family="Liberation Sans" font-size="8.5" font-weight="bold" fill="#727272" style="">Arab Emirates</text><text x="554.7" y="605.2" textLength="33.8" lengthAdjust="spacingAndGlyphs" font-family="Liberation Sans" font-size="8.5" font-weight="normal" fill="#5f6670" style="font-style:italic;">Red Sea</text><text x="401.7" y="615.4" textLength="14.7" lengthAdjust="spacingAndGlyphs" font-family="Liberation Sans" font-size="8.5" font-weight="bold" fill="#727272" style="">Mali</text><text x="553.7" y="617.5" textLength="23.2" lengthAdjust="spacingAndGlyphs" font-family="Liberation Sans" font-size="8.5" font-weight="bold" fill="#727272" style="">Eritrea</text><text x="591.7" y="615.8" textLength="24.2" lengthAdjust="spacingAndGlyphs" font-family="Liberation Sans" font-size="8.5" font-weight="bold" fill="#727272" style="">Yemen</text><text x="453.4" y="626.2" textLength="54.9" lengthAdjust="spacing" font-family="Liberation Sans" font-size="9.5" font-weight="bold" fill="#555" style="">AFRICA</text><text x="520.9" y="622.3" textLength="23.3" lengthAdjust="spacingAndGlyphs" font-family="Liberation Sans" font-size="8.5" font-weight="bold" fill="#727272" style="">Sudan</text><text x="552.6" y="639.6" textLength="30.6" lengthAdjust="spacingAndGlyphs" font-family="Liberation Sans" font-size="8.5" font-weight="bold" fill="#727272" style="">Ethiopia</text><text x="593.8" y="647.0" textLength="28.5" lengthAdjust="spacingAndGlyphs" font-family="Liberation Sans" font-size="8.5" font-weight="bold" fill="#727272" style="">Somalia</text><text x="437.1" y="641.8" textLength="24.1" lengthAdjust="spacingAndGlyphs" font-family="Liberation Sans" font-size="8.5" font-weight="bold" fill="#727272" style="">Nigeria</text><text x="402.1" y="647.7" textLength="23.8" lengthAdjust="spacingAndGlyphs" font-family="Liberation Sans" font-size="8.5" font-weight="bold" fill="#727272" style="">Ghana</text><text x="450.2" y="661.2" textLength="37.0" lengthAdjust="spacingAndGlyphs" font-family="Liberation Sans" font-size="8.5" font-weight="bold" fill="#727272" style="">Cameroon</text><text x="489.9" y="675.5" textLength="40.5" lengthAdjust="spacingAndGlyphs" font-family="Liberation Sans" font-size="8.5" font-weight="bold" fill="#727272" style="">Democratic</text><text x="494.6" y="685.7" textLength="31.6" lengthAdjust="spacingAndGlyphs" font-family="Liberation Sans" font-size="8.5" font-weight="bold" fill="#727272" style="">Republic</text><text x="499.8" y="695.6" textLength="21.1" lengthAdjust="spacingAndGlyphs" font-family="Liberation Sans" font-size="8.5" font-weight="bold" fill="#727272" style="">of the</text><text x="497.7" y="706.1" textLength="24.3" lengthAdjust="spacingAndGlyphs" font-family="Liberation Sans" font-size="8.5" font-weight="bold" fill="#727272" style="">Congo</text><text x="451.3" y="682.5" textLength="23.2" lengthAdjust="spacingAndGlyphs" font-family="Liberation Sans" font-size="8.5" font-weight="bold" fill="#727272" style="">Gabon</text><text x="555.8" y="673.4" textLength="22.1" lengthAdjust="spacingAndGlyphs" font-family="Liberation Sans" font-size="8.5" font-weight="bold" fill="#727272" style="">Kenya</text><text x="540.6" y="704.5" textLength="32.1" lengthAdjust="spacingAndGlyphs" font-family="Liberation Sans" font-size="8.5" font-weight="bold" fill="#727272" style="">Tanzania</text><text x="617.0" y="696.5" textLength="30.6" lengthAdjust="spacingAndGlyphs" font-family="Liberation Sans" font-size="7" font-weight="bold" fill="#727272" style="">Seychelles</text><text x="473.4" y="724.7" textLength="25.4" lengthAdjust="spacingAndGlyphs" font-family="Liberation Sans" font-size="8.5" font-weight="bold" fill="#727272" style="">Angola</text><text x="536.8" y="730.4" textLength="25.3" lengthAdjust="spacingAndGlyphs" font-family="Liberation Sans" font-size="8.5" font-weight="bold" fill="#727272" style="">Malawi</text><text x="575.8" y="725.6" textLength="27.5" lengthAdjust="spacingAndGlyphs" font-family="Liberation Sans" font-size="7" font-weight="bold" fill="#727272" style="">Comoros</text><text x="92.0" y="636.1" textLength="12.0" lengthAdjust="spacingAndGlyphs" font-family="Liberation Sans" font-size="8.5" font-weight="bold" fill="#727272" style="">sta</text><text x="92.0" y="646.1" textLength="7.0" lengthAdjust="spacingAndGlyphs" font-family="Liberation Sans" font-size="8.5" font-weight="bold" fill="#727272" style="">ca</text></g><path d="M162.0 949.4 L625.7 888.2" fill="none" stroke="#111" stroke-width="1.1" stroke-linejoin="round"/><path d="M121.2 988.0 L621.4 856.1" fill="none" stroke="#111" stroke-width="1.1" stroke-linejoin="round"/><path d="M447.8 941.2 L482.8 884.4 L602.4 866.9" fill="none" stroke="#111" stroke-width="1.1" stroke-linejoin="round"/><path d="M447.8 941.2 L614.0 882.3" fill="none" stroke="#111" stroke-width="1.1" stroke-linejoin="round"/><path d="M430.3 874.2 L471.2 988.0" fill="none" stroke="#111" stroke-width="1.1" stroke-linejoin="round"/><path d="M587.8 853.8 L621.4 856.1 L602.4 866.9" fill="none" stroke="#111" stroke-width="1.1" stroke-linejoin="round"/><path d="M590.7 883.8 L614.0 882.3 L625.7 888.2" fill="none" stroke="#111" stroke-width="1.1" stroke-linejoin="round"/></g></svg><div class="a" style="left:834px;top:107px;width:1051px;height:503px;border-radius:5px 5px 0 0;box-shadow:0 9px 14px -5px rgba(0,0,0,0.32)"></div><div class="a" style="left:834px;top:107px;width:1051px;height:77px;background:#282828;border-radius:5px 5px 0 0"></div><div class="a" style="left:834px;top:184px;width:4px;height:426px;background:#282828;"></div><div class="a" style="left:1881px;top:184px;width:4px;height:426px;background:#282828;"></div><div class="a" style="left:834px;top:606px;width:1051px;height:4px;background:#282828;"></div><div class="a" style="left:834px;top:184px;width:1px;height:426px;background:#1c1c1c;"></div><div class="a" style="left:834px;top:609px;width:1051px;height:1px;background:#1a1a1a;"></div><div class="a" style="left:838px;top:184px;width:1043px;height:422px;background:rgba(0,0,0,0.815);"></div><div class="a" style="left:846px;top:113px;width:18px;height:17px;background:linear-gradient(135deg,#4a5155,#33393c);"></div><svg style="left:851px;top:117px" width="8" height="10"><path d="M1.5 1L6 5L1.5 9" stroke="#9aa3a6" stroke-width="1.1" fill="none"/></svg><div class="a" style="left:878px;top:118px;width:8px;height:8px;border-radius:50%;background:#e6e6e6"></div><div id="t22" class="a nw" style="transform-origin:0 0;transform:scaleX(0.9678);left:1287.8px;top:115.18px;font-family:'Liberation Sans',sans-serif;font-size:13.6px;line-height:13.6px;height:13.6px;color:#e3e3e3;font-weight:normal;">~ : bash — Konsole</div><div class="a" style="left:1805px;top:124px;width:9px;height:2px;background:#e6e6e6;"></div><div class="a" style="left:1832px;top:117px;width:9px;height:9px;border:2px solid #e6e6e6"></div><svg style="left:1859px;top:117px" width="10" height="10"><path d="M1 1L9 9M9 1L1 9" stroke="#e6e6e6" stroke-width="2"/></svg><svg style="left:855px;top:152px" width="20" height="19"><path d="M1.5 1.5H10L13 4.5H16.5V16.5H1.5Z" fill="none" stroke="#eee" stroke-width="1.4"/><path d="M10 1.5V4.5H16.5" fill="none" stroke="#eee" stroke-width="1.2"/><path d="M15.5 12V18M12.5 15H18.5" stroke="#eee" stroke-width="1.4"/></svg><div id="t23" class="a nw" style="transform-origin:0 0;transform:scaleX(1.0055);left:879.4px;top:154.25px;font-family:'Liberation Sans',sans-serif;font-size:13.4px;line-height:13.4px;height:13.4px;color:#e6e6e6;font-weight:normal;">Новая вкладка</div><svg style="left:971px;top:169px" width="8" height="5"><path d="M1 1L4 4L7 1" stroke="#ccc" fill="none"/></svg><svg style="left:993px;top:152px" width="18" height="18"><rect x="1.5" y="1.5" width="15" height="15" fill="none" stroke="#eee" stroke-width="1.4"/><path d="M9 1.5V16.5" stroke="#eee" stroke-width="1.4"/><path d="M1.5 4.5H16.5" stroke="#eee" stroke-width="1.2"/></svg><div id="t24" class="a nw" style="transform-origin:0 0;transform:scaleX(1.0319);left:1017px;top:154.25px;font-family:'Liberation Sans',sans-serif;font-size:13.4px;line-height:13.4px;height:13.4px;color:#e6e6e6;font-weight:normal;">Разделить окно</div><svg style="left:1127px;top:157px" width="12" height="8"><path d="M1 1.5L6 6L11 1.5" stroke="#ddd" stroke-width="1.2" fill="none"/></svg><svg style="left:1545px;top:152px" width="16" height="18"><path d="M1.5 1.5H7V15.5H1.5Z" fill="none" stroke="#6a6a6a" stroke-width="1.2"/><path d="M5 4.5H10.5L14.5 8.5V16.5H5" fill="none" stroke="#6a6a6a" stroke-width="1.2"/></svg><div id="t25" class="a nw" style="transform-origin:0 0;transform:scaleX(1.0609);left:1569px;top:154.65px;font-family:'Liberation Sans',sans-serif;font-size:13.4px;line-height:13.4px;height:13.4px;color:#6b6b6b;font-weight:normal;">Копировать</div><svg style="left:1667px;top:152px" width="16" height="18"><rect x="1.5" y="3" width="13" height="14" fill="none" stroke="#eee" stroke-width="1.3"/><rect x="4" y="1" width="8" height="4" fill="#eee"/><path d="M4 8H12M4 11H12M4 14H8" stroke="#eee"/></svg><div id="t26" class="a nw" style="transform-origin:0 0;transform:scaleX(1.0041);left:1690.5px;top:154.65px;font-family:'Liberation Sans',sans-serif;font-size:13.4px;line-height:13.4px;height:13.4px;color:#e6e6e6;font-weight:normal;">Вставить</div><svg style="left:1768px;top:152px" width="18" height="18"><circle cx="7" cy="7" r="5.5" fill="none" stroke="#eee" stroke-width="1.3"/><path d="M11 11L16.5 16.5" stroke="#eee" stroke-width="1.4"/></svg><div id="t27" class="a nw" style="transform-origin:0 0;transform:scaleX(1.0074);left:1792.5px;top:154.65px;font-family:'Liberation Sans',sans-serif;font-size:13.4px;line-height:13.4px;height:13.4px;color:#e6e6e6;font-weight:normal;">Найти</div><svg style="left:1850px;top:154px" width="17" height="14"><path d="M0 1.5H16M0 7H16M0 12.5H16" stroke="#f2f2f2" stroke-width="2"/></svg><div class="a" style="left:1867px;top:190px;width:8px;height:410px;border-radius:4px;background:#062a06;border:1px solid #2a9a2a"></div><div class="a nw" style="left:842.6px;top:186.54px;font-family:'Liberation Mono',monospace;font-size:13px;line-height:13px;letter-spacing:-0.801px;color:#19d019;font-weight:normal;white-space:pre">tokezo@localhost:~&gt; screenfetch</div><div class="a nw" style="left:842.6px;top:201.54px;font-family:'Liberation Mono',monospace;font-size:13px;line-height:13px;letter-spacing:-0.801px;color:#50e650;font-weight:bold;white-space:pre">             .;ldkO0000Okdl;.</div><div class="a nw" style="left:842.6px;top:216.54px;font-family:'Liberation Mono',monospace;font-size:13px;line-height:13px;letter-spacing:-0.801px;color:#50e650;font-weight:bold;white-space:pre">         .;d00xl:^''''''^:ok00d;.</div><div class="a nw" style="left:842.6px;top:231.54px;font-family:'Liberation Mono',monospace;font-size:13px;line-height:13px;letter-spacing:-0.801px;color:#50e650;font-weight:bold;white-space:pre">       .d00l'                'o00d.</div><div class="a nw" style="left:842.6px;top:246.54px;font-family:'Liberation Mono',monospace;font-size:13px;line-height:13px;letter-spacing:-0.801px;color:#50e650;font-weight:bold;white-space:pre">     .d0K^'  Okxoc;:,.          ^O0d.</div><div class="a nw" style="left:842.6px;top:261.54px;font-family:'Liberation Mono',monospace;font-size:13px;line-height:13px;letter-spacing:-0.801px;color:#50e650;font-weight:bold;white-space:pre">    .OVVAK0kOKKKKKKKKKKOxo:,      lKO.</div><div class="a nw" style="left:842.6px;top:276.54px;font-family:'Liberation Mono',monospace;font-size:13px;line-height:13px;letter-spacing:-0.801px;color:#50e650;font-weight:bold;white-space:pre">   ,0VVAKKKKKKKKKKKKK0P^,,,^dx:    ;00,</div><div class="a nw" style="left:842.6px;top:291.54px;font-family:'Liberation Mono',monospace;font-size:13px;line-height:13px;letter-spacing:-0.801px;color:#50e650;font-weight:bold;white-space:pre">  .OVVAKKKKKKKKKKKKKk'.oOPPb.'0k.   cKO.</div><div class="a nw" style="left:842.6px;top:306.54px;font-family:'Liberation Mono',monospace;font-size:13px;line-height:13px;letter-spacing:-0.801px;color:#50e650;font-weight:bold;white-space:pre">  :KVAKKKKKKKKKKKKKK: kKx..dd lKd   'OK:</div><div class="a nw" style="left:842.6px;top:321.54px;font-family:'Liberation Mono',monospace;font-size:13px;line-height:13px;letter-spacing:-0.801px;color:#50e650;font-weight:bold;white-space:pre">  lKlKKKKKKKKKOx0KKKd ^0KKKO' kKKc   lKl</div><div class="a nw" style="left:842.6px;top:336.54px;font-family:'Liberation Mono',monospace;font-size:13px;line-height:13px;letter-spacing:-0.801px;color:#50e650;font-weight:bold;white-space:pre">  lKlKKKKKKKKKK;.;oOKx,..^..;kKKK0.  lKl</div><div class="a nw" style="left:842.6px;top:351.54px;font-family:'Liberation Mono',monospace;font-size:13px;line-height:13px;letter-spacing:-0.801px;color:#50e650;font-weight:bold;white-space:pre">  :KAlKKKKKKKKK0o;...^cdxxOK0O/^^'  .0K:</div><div class="a nw" style="left:842.6px;top:366.54px;font-family:'Liberation Mono',monospace;font-size:13px;line-height:13px;letter-spacing:-0.801px;color:#50e650;font-weight:bold;white-space:pre">   kKAVKKKKKKKKKKKK0x;,,......,;od  lKP</div><div class="a nw" style="left:842.6px;top:381.54px;font-family:'Liberation Mono',monospace;font-size:13px;line-height:13px;letter-spacing:-0.801px;color:#50e650;font-weight:bold;white-space:pre">   '0KAVKKKKKKKKKKKKKKKKKK00KK0o^  c00'</div><div class="a nw" style="left:842.6px;top:396.54px;font-family:'Liberation Mono',monospace;font-size:13px;line-height:13px;letter-spacing:-0.801px;color:#50e650;font-weight:bold;white-space:pre">    'kKAVOxddxkOO00000Okxoc;''   .dKV'</div><div class="a nw" style="left:842.6px;top:411.54px;font-family:'Liberation Mono',monospace;font-size:13px;line-height:13px;letter-spacing:-0.801px;color:#50e650;font-weight:bold;white-space:pre">      l0Ko.                    .c00l'</div><div class="a nw" style="left:842.6px;top:426.54px;font-family:'Liberation Mono',monospace;font-size:13px;line-height:13px;letter-spacing:-0.801px;color:#50e650;font-weight:bold;white-space:pre">       'l0Kk:.              .;xK0l'</div><div class="a nw" style="left:842.6px;top:441.54px;font-family:'Liberation Mono',monospace;font-size:13px;line-height:13px;letter-spacing:-0.801px;color:#50e650;font-weight:bold;white-space:pre">          'lkK0xc;:,,,,:;odO0kl'</div><div class="a nw" style="left:842.6px;top:456.54px;font-family:'Liberation Mono',monospace;font-size:13px;line-height:13px;letter-spacing:-0.801px;color:#50e650;font-weight:bold;white-space:pre">              '^:ldxkkkxdl:^'</div><div class="a nw" style="left:1157.6px;top:201.54px;font-family:'Liberation Mono',monospace;font-size:13px;line-height:13px;letter-spacing:-0.801px;color:#50e650;font-weight:bold;white-space:pre">tokezo@localhost.localdomain</div><div class="a nw" style="left:1157.6px;top:216.54px;font-family:'Liberation Mono',monospace;font-size:13px;line-height:13px;letter-spacing:-0.801px;color:#50e650;font-weight:bold;white-space:pre">OS:</div><div class="a nw" style="left:1178.6px;top:216.54px;font-family:'Liberation Mono',monospace;font-size:13px;line-height:13px;letter-spacing:-0.801px;color:#19d019;font-weight:normal;white-space:pre"> openSUSE 20231221</div><div class="a nw" style="left:1157.6px;top:231.54px;font-family:'Liberation Mono',monospace;font-size:13px;line-height:13px;letter-spacing:-0.801px;color:#50e650;font-weight:bold;white-space:pre">Kernel:</div><div class="a nw" style="left:1206.6px;top:231.54px;font-family:'Liberation Mono',monospace;font-size:13px;line-height:13px;letter-spacing:-0.801px;color:#19d019;font-weight:normal;white-space:pre"> x86_64 Linux 6.6.6-1-default</div><div class="a nw" style="left:1157.6px;top:246.54px;font-family:'Liberation Mono',monospace;font-size:13px;line-height:13px;letter-spacing:-0.801px;color:#50e650;font-weight:bold;white-space:pre">Uptime:</div><div class="a nw" style="left:1206.6px;top:246.54px;font-family:'Liberation Mono',monospace;font-size:13px;line-height:13px;letter-spacing:-0.801px;color:#19d019;font-weight:normal;white-space:pre"> 11h 34m</div><div class="a nw" style="left:1157.6px;top:261.54px;font-family:'Liberation Mono',monospace;font-size:13px;line-height:13px;letter-spacing:-0.801px;color:#50e650;font-weight:bold;white-space:pre">Packages:</div><div class="a nw" style="left:1220.6px;top:261.54px;font-family:'Liberation Mono',monospace;font-size:13px;line-height:13px;letter-spacing:-0.801px;color:#19d019;font-weight:normal;white-space:pre"> 3363</div><div class="a nw" style="left:1157.6px;top:276.54px;font-family:'Liberation Mono',monospace;font-size:13px;line-height:13px;letter-spacing:-0.801px;color:#50e650;font-weight:bold;white-space:pre">Shell:</div><div class="a nw" style="left:1199.6px;top:276.54px;font-family:'Liberation Mono',monospace;font-size:13px;line-height:13px;letter-spacing:-0.801px;color:#19d019;font-weight:normal;white-space:pre"> bash</div><div class="a nw" style="left:1157.6px;top:291.54px;font-family:'Liberation Mono',monospace;font-size:13px;line-height:13px;letter-spacing:-0.801px;color:#50e650;font-weight:bold;white-space:pre">Resolution:</div><div class="a nw" style="left:1234.6px;top:291.54px;font-family:'Liberation Mono',monospace;font-size:13px;line-height:13px;letter-spacing:-0.801px;color:#19d019;font-weight:normal;white-space:pre"> 1920x1080</div><div class="a nw" style="left:1157.6px;top:306.54px;font-family:'Liberation Mono',monospace;font-size:13px;line-height:13px;letter-spacing:-0.801px;color:#50e650;font-weight:bold;white-space:pre">DE:</div><div class="a nw" style="left:1178.6px;top:306.54px;font-family:'Liberation Mono',monospace;font-size:13px;line-height:13px;letter-spacing:-0.801px;color:#19d019;font-weight:normal;white-space:pre"> KDE 5.113.0 / Plasma 5.27.10</div><div class="a nw" style="left:1157.6px;top:321.54px;font-family:'Liberation Mono',monospace;font-size:13px;line-height:13px;letter-spacing:-0.801px;color:#50e650;font-weight:bold;white-space:pre">WM:</div><div class="a nw" style="left:1178.6px;top:321.54px;font-family:'Liberation Mono',monospace;font-size:13px;line-height:13px;letter-spacing:-0.801px;color:#19d019;font-weight:normal;white-space:pre"> KWin</div><div class="a nw" style="left:1157.6px;top:336.54px;font-family:'Liberation Mono',monospace;font-size:13px;line-height:13px;letter-spacing:-0.801px;color:#50e650;font-weight:bold;white-space:pre">GTK Theme:</div><div class="a nw" style="left:1227.6px;top:336.54px;font-family:'Liberation Mono',monospace;font-size:13px;line-height:13px;letter-spacing:-0.801px;color:#19d019;font-weight:normal;white-space:pre"> Breeze [GTK2/3]</div><div class="a nw" style="left:1157.6px;top:351.54px;font-family:'Liberation Mono',monospace;font-size:13px;line-height:13px;letter-spacing:-0.801px;color:#50e650;font-weight:bold;white-space:pre">Icon Theme:</div><div class="a nw" style="left:1234.6px;top:351.54px;font-family:'Liberation Mono',monospace;font-size:13px;line-height:13px;letter-spacing:-0.801px;color:#19d019;font-weight:normal;white-space:pre"> Materia-Manjaro-Dark-2</div><div class="a nw" style="left:1157.6px;top:366.54px;font-family:'Liberation Mono',monospace;font-size:13px;line-height:13px;letter-spacing:-0.801px;color:#50e650;font-weight:bold;white-space:pre">Disk:</div><div class="a nw" style="left:1192.6px;top:366.54px;font-family:'Liberation Mono',monospace;font-size:13px;line-height:13px;letter-spacing:-0.801px;color:#19d019;font-weight:normal;white-space:pre"> 861G / 8,8T (10%)</div><div class="a nw" style="left:1157.6px;top:381.54px;font-family:'Liberation Mono',monospace;font-size:13px;line-height:13px;letter-spacing:-0.801px;color:#50e650;font-weight:bold;white-space:pre">CPU:</div><div class="a nw" style="left:1185.6px;top:381.54px;font-family:'Liberation Mono',monospace;font-size:13px;line-height:13px;letter-spacing:-0.801px;color:#19d019;font-weight:normal;white-space:pre"> AMD Ryzen 7 5700G with Radeon Graphics @ 16x 5.288GHz</div><div class="a nw" style="left:1157.6px;top:396.54px;font-family:'Liberation Mono',monospace;font-size:13px;line-height:13px;letter-spacing:-0.801px;color:#50e650;font-weight:bold;white-space:pre">GPU:</div><div class="a nw" style="left:1185.6px;top:396.54px;font-family:'Liberation Mono',monospace;font-size:13px;line-height:13px;letter-spacing:-0.801px;color:#19d019;font-weight:normal;white-space:pre"> AMD Radeon RX 6750 XT (navi22, LLVM 17.0.6, DRM 3.54, 6.6.6-1-default)</div><div class="a nw" style="left:1157.6px;top:411.54px;font-family:'Liberation Mono',monospace;font-size:13px;line-height:13px;letter-spacing:-0.801px;color:#50e650;font-weight:bold;white-space:pre">RAM:</div><div class="a nw" style="left:1185.6px;top:411.54px;font-family:'Liberation Mono',monospace;font-size:13px;line-height:13px;letter-spacing:-0.801px;color:#19d019;font-weight:normal;white-space:pre"> 5797MiB / 31878MiB</div><div class="a nw" style="left:842.6px;top:471.54px;font-family:'Liberation Mono',monospace;font-size:13px;line-height:13px;letter-spacing:-0.801px;color:#19d019;font-weight:normal;white-space:pre">tokezo@localhost:~&gt; </div><div class="a" style="left:983px;top:472px;width:7px;height:14px;background:#1ee61e;"></div><div class="a" style="left:0px;top:1036px;width:1920px;height:44px;background:#242424;"></div><svg style="left:5px;top:1041px" width="34" height="34" viewBox="0 0 34 34"><circle cx="17" cy="17" r="14.6" fill="none" stroke="#73ba25" stroke-width="2.6"/>
<path d="M7 7.4L10 6.3C15 6.5 22 8.5 25.1 11.1C27 13 28 15.5 28.1 17.7L12 17C14 19.5 18 21 28 20C26 23 22 25 16 25.5L7.4 25.9A12.3 12.3 0 0 1 7 7.4Z" fill="#73ba25"/>
<circle cx="21.1" cy="14.4" r="3.7" fill="#242424"/><circle cx="21.1" cy="14.4" r="2.5" fill="#73ba25"/><circle cx="21.3" cy="14" r="0.9" fill="#242424"/></svg><svg style="left:57px;top:1044px" width="28" height="28"><defs><linearGradient id="sg" x1="0" y1="0" x2="1" y2="1"><stop offset="0" stop-color="#4a4d50"/><stop offset="1" stop-color="#232628"/></linearGradient></defs>
<rect width="28" height="27" fill="url(#sg)"/><rect x="3" y="9" width="20" height="2" fill="#00c2a8"/><rect x="20" y="9" width="3" height="2" fill="#555"/><circle cx="20" cy="10" r="2.3" fill="#fff"/>
<rect x="3" y="17" width="22" height="2" fill="#555"/><rect x="3" y="17" width="10" height="2" fill="#00c2a8"/><circle cx="10" cy="18" r="2.3" fill="#fff"/></svg><div class="a" style="left:97px;top:1037px;width:48px;height:43px;background:#333333;"></div><div class="a" style="left:147px;top:1037px;width:48px;height:43px;background:#333333;"></div><div class="a" style="left:197px;top:1037px;width:48px;height:43px;background:#333333;"></div><div class="a" style="left:247px;top:1037px;width:48px;height:43px;background:#333333;"></div><div class="a" style="left:297px;top:1037px;width:48px;height:43px;background:#333333;"></div><div class="a" style="left:147px;top:1037px;width:48px;height:2px;background:#00b8a6;"></div><svg style="left:107px;top:1045px" width="28" height="26"><path d="M0 3C0 1.5 1 0.5 2.5 0.5H10L13 3.5H25.5C27 3.5 28 4.5 28 6V23.5C28 25 27 26 25.5 26H2.5C1 26 0 25 0 23.5Z" fill="#00c7b5"/>
<path d="M0 7H28" stroke="#00b3a1" stroke-width="1"/><path d="M16 21V17.5L20 14L24 17.5V21H21.5V18.5H18.5V21Z" fill="#0b3b37"/></svg><svg style="left:157px;top:1044px" width="29" height="28"><defs><linearGradient id="tg" x1="0" y1="0" x2="1" y2="1"><stop offset="0" stop-color="#505759"/><stop offset="1" stop-color="#2b3033"/></linearGradient></defs>
<rect width="28" height="27" fill="url(#tg)"/><path d="M11 7L18 14L11 21" stroke="#a9b1b3" stroke-width="1.4" fill="none"/></svg><svg style="left:205px;top:1042px" width="32" height="32" viewBox="0 0 32 32">
<path d="M16 16L2.1 8A16 16 0 0 1 29.9 8Z" fill="#db3b2d"/><path d="M16 16L29.9 8A16 16 0 0 1 16 32Z" fill="#fbc02d"/><path d="M16 16L16 32A16 16 0 0 1 2.1 8Z" fill="#2e9e49"/>
<circle cx="16" cy="16" r="7.4" fill="#fff"/><circle cx="16" cy="16" r="5.8" fill="#1b73e8"/></svg><svg style="left:257px;top:1045px" width="27" height="27" viewBox="0 0 27 27"><defs><linearGradient id="stg" x1="0" y1="0" x2="0" y2="1"><stop offset="0" stop-color="#0f4c8a"/><stop offset="1" stop-color="#2a8ed8"/></linearGradient></defs>
<circle cx="13.5" cy="13.5" r="13.3" fill="url(#stg)"/><circle cx="18" cy="9" r="4" fill="none" stroke="#fff" stroke-width="1.8"/><path d="M0.5 15L9 18.5L16 11" stroke="#fff" stroke-width="3" fill="none"/><circle cx="9" cy="19" r="3" fill="#fff"/><circle cx="9" cy="19" r="1.6" fill="#1f6fb5"/></svg><svg style="left:305px;top:1042px" width="32" height="32" viewBox="0 0 32 32"><rect width="32" height="32" fill="#dd1100"/>
<polygon fill="#fff" points="16,2.5 18.3,7.6 23.2,5.2 22.8,10.4 28.3,11.4 24.8,15.5 28.6,19.6 23.2,20.6 23.2,26 18.3,23.7 16,28.8 13.7,23.7 8.8,26 8.8,20.6 3.4,19.6 7.2,15.5 3.7,11.4 9.2,10.4 8.8,5.2 13.7,7.6"/>
<polygon fill="none" stroke="#dd1100" stroke-width="1.3" points="16,9 21,13 19.5,20 12.5,20 11,13"/><polygon fill="none" stroke="#dd1100" stroke-width="1" points="16,12 18.8,14.2 17.8,18 14.2,18 13.2,14.2"/></svg><svg style="left:1551px;top:1050px" width="17" height="17"><circle cx="8.5" cy="8.5" r="8.2" fill="#1aa597"/><rect x="7.4" y="3.6" width="2.2" height="6.6" fill="#fff"/><rect x="7.4" y="11.6" width="2.2" height="2.2" fill="#fff"/></svg><svg style="left:1580px;top:1049px" width="19" height="19"><circle cx="9.5" cy="9.5" r="9" fill="#dcdcdc"/><circle cx="12" cy="7.2" r="2.8" fill="none" stroke="#242424" stroke-width="1.4"/><path d="M1 11L6.5 13L11 8.5" stroke="#242424" stroke-width="2" fill="none"/><circle cx="6.5" cy="13" r="2" fill="#242424"/></svg><svg style="left:1610px;top:1049px" width="18" height="18"><rect x="7" y="1" width="9" height="10" rx="1" fill="#777"/><rect x="1" y="6" width="10" height="11" rx="1" fill="#ddd"/><path d="M3 9H9M3 11.5H9M3 14H7" stroke="#444"/></svg><svg style="left:1640px;top:1050px" width="18" height="17"><path d="M1 5.5H5L10 1V16L5 11.5H1Z" fill="#e6e6e6"/><path d="M12 4.5C14 6.5 14 10.5 12 12.5M14.5 2C18 5.5 18 11.5 14.5 15" stroke="#e6e6e6" stroke-width="1.6" fill="none"/></svg><div id="t28" class="a nw" style="transform-origin:0 0;transform:scaleX(1.1687);left:1669px;top:1051.61px;font-family:'Liberation Sans',sans-serif;font-size:17px;line-height:17px;height:17px;color:#e0e0e0;font-weight:normal;">us</div><svg style="left:1700px;top:1050px" width="19" height="17"><path d="M1 1H18V13H12L10.5 15H8.5L7 13H1Z" fill="none" stroke="#e6e6e6" stroke-width="2"/></svg><svg style="left:1733px;top:1049px" width="13" height="19"><rect x="0.5" y="0.5" width="12" height="18" rx="6" fill="#dedede"/><path d="M4 6L9 11L6.5 13.5V5.5L9 8L4 13" stroke="#242424" stroke-width="1.2" fill="none"/></svg><svg style="left:1761px;top:1054px" width="13" height="8"><path d="M0 7.5L6.5 0.5L13 7.5Z" fill="#e6e6e6"/></svg><div id="t29" class="a nw" style="transform-origin:0 0;transform:scaleX(1.1108);left:1805.5px;top:1040.24px;font-family:'Liberation Sans',sans-serif;font-size:19.8px;line-height:19.8px;height:19.8px;color:#e6e6e6;font-weight:normal;">21:35</div><div id="t30" class="a nw" style="transform-origin:0 0;transform:scaleX(1.0635);left:1786.5px;top:1061.61px;font-family:'Liberation Sans',sans-serif;font-size:17px;line-height:17px;height:17px;color:#e6e6e6;font-weight:normal;">23.12.2023</div><svg style="left:1890px;top:1047px" width="25" height="22"><rect x="0" y="0" width="25" height="3" fill="#888"/><path d="M0 3H25V21H20V17H5V21H0Z" fill="#e6e6e6"/></svg></body></html>
